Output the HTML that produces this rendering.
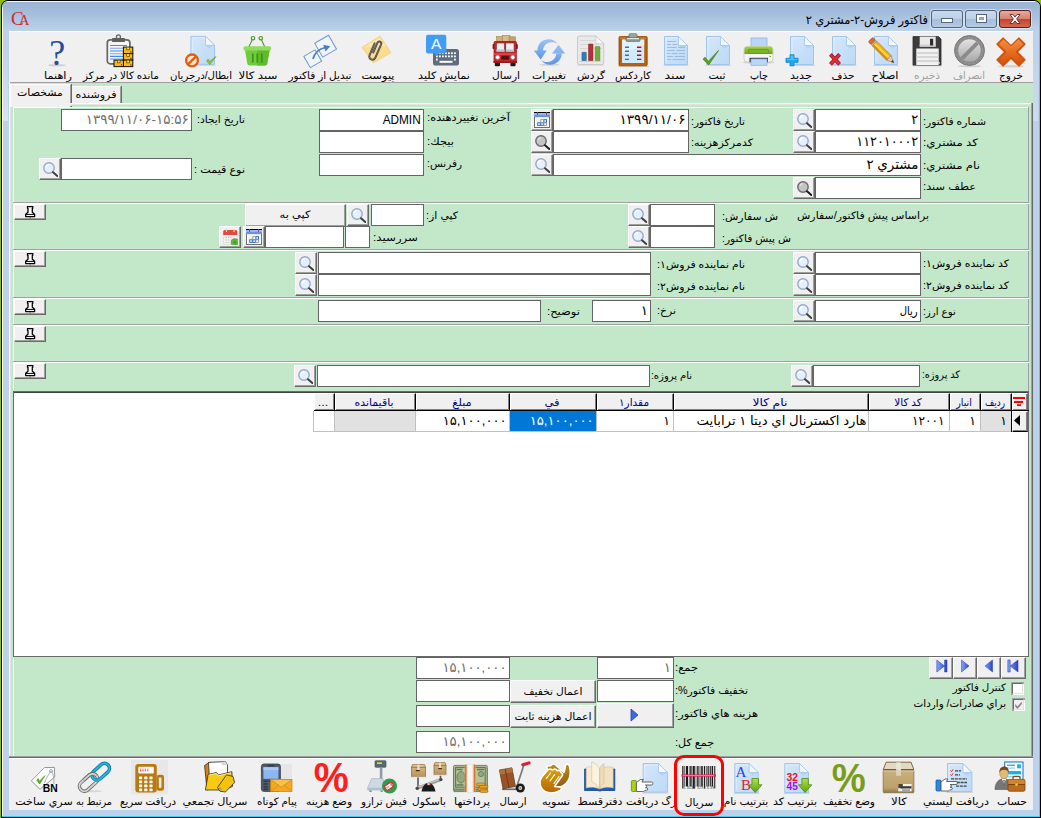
<!DOCTYPE html>
<html lang="fa"><head><meta charset="utf-8"><title>فاکتور فروش</title><style>
html,body{margin:0;padding:0}
body{width:1041px;height:818px;position:relative;overflow:hidden;background:#000;font-family:'Liberation Sans','DejaVu Sans',sans-serif;font-size:11px}
body div,body svg,body i{position:absolute;box-sizing:content-box}
.t{margin:0;padding:0}
.t span{position:static}
.ic{overflow:visible}
.in{border:1px solid #646464}
.bt{background:#f0f0f0;border:1px solid;border-color:#fff #696969 #696969 #fff;box-shadow:inset -1px -1px 0 #a0a0a0}
.gh{background:#f0f0f0;border:1px solid;border-color:#fff #000 #000 #fff;box-shadow:inset -1px -1px 0 #808080}
.cb{width:9px;height:9px;background:#fff;border:1px solid;border-color:#696969 #e3e3e3 #e3e3e3 #696969;box-shadow:-1px -1px 0 #a0a0a0,1px 1px 0 #fff,1px -1px 0 #a0a0a0,-1px 1px 0 #a0a0a0}
.wb{border:1px solid #56657a;border-radius:3px;background:linear-gradient(#c9daee 0,#bcd0e8 50%,#a4bedd 50%,#b5cbe6 100%);box-shadow:0 0 0 1px rgba(255,255,255,.45)}
.wb i{background:#fff;outline:1px solid #56657a;display:block}
.wb.cl{border-color:#5a1f1c;background:linear-gradient(#e6aa9c 0,#d8806d 50%,#c4422c 50%,#d26a4e 100%)}
</style></head>
<body>
<svg width="0" height="0" style="left:0;top:0"><defs>
<linearGradient id="gPg" x1="0" y1="0" x2="1" y2="1"><stop offset="0" stop-color="#d3e7fb"/><stop offset="1" stop-color="#bcd9f6"/></linearGradient>
<linearGradient id="gOr" x1="0" y1="0" x2="0" y2="1"><stop offset="0" stop-color="#f78f3f"/><stop offset="1" stop-color="#d54c06"/></linearGradient>
<linearGradient id="gGy" x1="0" y1="0" x2="0" y2="1"><stop offset="0" stop-color="#e2e2e2"/><stop offset="1" stop-color="#a9a9a9"/></linearGradient>
<linearGradient id="gGn" x1="0" y1="0" x2="0" y2="1"><stop offset="0" stop-color="#a4d648"/><stop offset="1" stop-color="#6ea51c"/></linearGradient>
<linearGradient id="gBl" x1="0" y1="0" x2="0" y2="1"><stop offset="0" stop-color="#9cc3f7"/><stop offset="1" stop-color="#5f95e6"/></linearGradient>
<linearGradient id="gBr" x1="0" y1="0" x2="0" y2="1"><stop offset="0" stop-color="#d4b47c"/><stop offset="1" stop-color="#b4935a"/></linearGradient>
<linearGradient id="gGd" x1="0" y1="0" x2="0" y2="1"><stop offset="0" stop-color="#d79a16"/><stop offset="1" stop-color="#a8650a"/></linearGradient>
<linearGradient id="gAr" x1="0" y1="0" x2="0" y2="1"><stop offset="0" stop-color="#b4e04a"/><stop offset="1" stop-color="#5fa010"/></linearGradient>
<linearGradient id="gPc" x1="0" y1="0" x2="1" y2="0"><stop offset="0" stop-color="#f6c21a"/><stop offset=".5" stop-color="#f3a90c"/><stop offset="1" stop-color="#d98508"/></linearGradient>
<linearGradient id="gNav" x1="0" y1="0" x2="1" y2="0"><stop offset="0" stop-color="#86a6fa"/><stop offset="1" stop-color="#2a44c8"/></linearGradient>
<linearGradient id="gBox" x1="0" y1="0" x2="0" y2="1"><stop offset="0" stop-color="#c9b07e"/><stop offset=".8" stop-color="#bca06a"/><stop offset="1" stop-color="#8f7444"/></linearGradient>
<linearGradient id="gHf" x1="0" y1="0" x2="0" y2="1"><stop offset="0" stop-color="#d6a20e"/><stop offset="1" stop-color="#b86604"/></linearGradient>
<linearGradient id="gHb" x1="0" y1="0" x2="0" y2="1"><stop offset="0" stop-color="#b88c1a"/><stop offset="1" stop-color="#9a5810"/></linearGradient>
</defs></svg>
<div style="left:0;top:0;width:1041px;height:818px;background:#8fbc14"></div>
<div style="left:1px;top:0;width:1040px;height:818px;background:#000;border-radius:7px 7px 0 0"></div>
<div style="left:2px;top:1px;width:1038px;height:816px;background:#bcd2ea;border-radius:6px 6px 0 0"></div>
<div style="left:2px;top:1px;width:1038px;height:30px;background:linear-gradient(#99b4d2,#a3bddb 40%,#bdd3eb);border-radius:6px 6px 0 0"></div>
<div style="left:7px;top:1px;width:1028px;height:1px;background:#f4f8fc;"></div>
<div style="left:1039px;top:7px;width:1px;height:810px;background:#3fd0ff;"></div>
<div style="left:2px;top:816px;width:1038px;height:1px;background:#3fd0ff;"></div>
<div style="left:2px;top:7px;width:1px;height:809px;background:#fff;"></div>
<div style="left:3px;top:45px;width:5px;height:76px;background:linear-gradient(#bcd2ea,#d6e4f3);"></div>
<div style="left:1033px;top:45px;width:5px;height:76px;background:linear-gradient(#bcd2ea,#cbdcef);"></div>
<div class="t" id="t1" style="top:11.5px;line-height:16px;font-size:12px;color:#000;white-space:nowrap;direction:rtl;right:113.5px;transform-origin:100% 50%;transform:scaleX(0.9541);">فاکتور فروش-۲-مشتري ۲</div>
<div class="wb" style="left:931px;top:10px;width:30px;height:16px"><i style="left:10px;top:8px;width:10px;height:3px"></i></div>
<div class="wb" style="left:965px;top:10px;width:30px;height:16px"><i style="left:11px;top:4px;width:5px;height:3px;background:#8ea4c4;border:2px solid #fff;outline:1px solid #56657a"></i></div>
<div class="wb cl" style="left:999px;top:10px;width:30px;height:16px"><svg width="14" height="12" viewBox="0 0 14 12" style="left:8px;top:2px"><path d="M2 1.5h3l2 2.6 2-2.6h3L8.6 6l3.4 4.500h-3l-2-2.6-2 2.6H2L5.400 6z" fill="#fff" stroke="#5a2a25" stroke-width=".9"/></svg></div>
<div class="t" id="t2" style="top:11.0px;line-height:16px;font-size:15px;color:#000;white-space:nowrap;left:11px;transform-origin:0 50%;"><span style="font-family:'Liberation Serif',serif;color:#d22b2b;letter-spacing:-5px;font-size:19px">C</span><span style="font-family:'Liberation Serif',serif;color:#d22b2b;font-size:15px">A</span></div>
<div style="left:9px;top:32px;width:1024px;height:50px;background:#f0f0f0;"></div>
<div style="left:9px;top:31px;width:1024px;height:1px;background:#fff;"></div>
<div style="left:9px;top:82px;width:1024px;height:1px;background:#a0a0a0;"></div>
<svg class="ic" style="left:995px;top:35px" width="36" height="34" viewBox="0 0 36 34"><ellipse cx="16" cy="31.300" rx="13" ry="1.200" fill="#000" opacity=".12"/><path transform="translate(16 17)" d="M0 -5.800L7.900 -13.700L13.700 -7.900L5.800 0L13.700 7.900L7.900 13.700L0 5.800L-7.900 13.700L-13.700 7.900L-5.800 0L-13.700 -7.900L-7.900 -13.700z" fill="url(#gOr)" stroke="#cf520c" stroke-width="1.800" stroke-linejoin="round"/><path transform="translate(16 17)" d="M-7.900 -12.600L0 -4.700L7.900 -12.600" fill="none" stroke="#fba55c" stroke-width="1" opacity=".7" stroke-linejoin="round"/></svg>
<div class="t" style="top:68.0px;line-height:16px;font-size:10.2px;color:#000;white-space:nowrap;direction:rtl;left:861px;width:300px;text-align:center;transform-origin:50% 50%;transform:scaleX(1.0247);"><span id="t3">خروج</span></div>
<svg class="ic" style="left:953px;top:35px" width="36" height="34" viewBox="0 0 36 34"><ellipse cx="16.500" cy="31.300" rx="12" ry="1" fill="#000" opacity=".12"/><circle cx="16.500" cy="15.500" r="15" fill="#8b8b8b" stroke="#7a7a7a" stroke-width="1"/><circle cx="16.500" cy="15.500" r="11.200" fill="url(#gGy)"/><path d="M7.500 22.200L23.200 6.500l2.700 2.700L10.200 24.900z" fill="#8b8b8b"/><circle cx="16.500" cy="15.500" r="13.200" fill="none" stroke="#a6a6a6" stroke-width=".7" stroke-dasharray="1.500 2.500"/></svg>
<div class="t" style="top:68.0px;line-height:16px;font-size:10.2px;color:#a0a0a0;white-space:nowrap;direction:rtl;left:819px;width:300px;text-align:center;transform-origin:50% 50%;transform:scaleX(0.9548);"><span id="t4">انصراف</span></div>
<svg class="ic" style="left:911px;top:35px" width="36" height="34" viewBox="0 0 36 34"><rect x="1" y="30.300" width="30" height="1" fill="#000" opacity=".12"/><path d="M2 1.600h25.500l2.500 2.500v26H2z" fill="#3d3d3d" stroke="#2a2a2a" stroke-width=".8"/><rect x="8.700" y="1.600" width="16" height="10" fill="#e9e9e9"/><rect x="8.700" y="9.600" width="16" height="2" fill="#cfcfcf"/><rect x="19" y="3.800" width="3.200" height="6.600" fill="#2e2e2e"/><rect x="5.300" y="13.500" width="22.400" height="16.500" fill="#f2f2f2"/><path d="M5.300 18h22.400M5.300 22h22.400M5.300 26h22.400" stroke="#cdcdcd" stroke-width="1.600"/><rect x="27.600" y="27.300" width="1.300" height="1.300" fill="#fff"/></svg>
<div class="t" style="top:68.0px;line-height:16px;font-size:10.2px;color:#a0a0a0;white-space:nowrap;direction:rtl;left:777px;width:300px;text-align:center;transform-origin:50% 50%;transform:scaleX(1.0452);"><span id="t5">ذخيره</span></div>
<svg class="ic" style="left:869px;top:35px" width="36" height="34" viewBox="0 0 36 34"><path d="M5.5 1.5h14l9 9v19h-23z" fill="url(#gPg)" stroke="#a2c5ee" stroke-width="1"/><path d="M7.0 27.0v-24h12" fill="none" stroke="#e4f0fc" stroke-width="1" opacity=".8"/><path d="M19.5 1.5v9h9z" fill="#f2f8fe" stroke="#a2c5ee" stroke-width=".8"/><path d="M19.5 10.5h9l-5.3999999999999995 3.15z" fill="#a9c9ee" opacity=".6"/><rect x="4.5" y="30.0" width="25" height="1" fill="#000" opacity=".12"/><g transform="translate(1.500 4.500) rotate(45)"><rect x="0" y="-3.200" width="4.200" height="6.400" rx="1.400" fill="#dd6a2c" stroke="#a8481a" stroke-width=".6"/><rect x="4.200" y="-3.200" width="1.800" height="6.400" fill="#b8b8b8" stroke="#777" stroke-width=".4"/><rect x="6" y="-3.200" width="20" height="6.400" fill="#f5b20c" stroke="#a9710a" stroke-width=".6"/><rect x="6" y="-1.100" width="20" height="2.200" fill="#fbd24a"/><rect x="6" y="1.300" width="20" height="1.900" fill="#dc8a08"/><path d="M26 -3.200L33 0L26 3.200z" fill="#e9c9a2" stroke="#8a6a4a" stroke-width=".5"/><path d="M30.300 -1.250L33 0L30.300 1.250z" fill="#333"/></g></svg>
<div class="t" style="top:68.0px;line-height:16px;font-size:10.2px;color:#000;white-space:nowrap;direction:rtl;left:735px;width:300px;text-align:center;transform-origin:50% 50%;transform:scaleX(1.1184);"><span id="t6">اصلاح</span></div>
<svg class="ic" style="left:827px;top:35px" width="36" height="34" viewBox="0 0 36 34"><path d="M5.5 1.5h14l9 9v19h-23z" fill="url(#gPg)" stroke="#a2c5ee" stroke-width="1"/><path d="M7.0 27.0v-24h12" fill="none" stroke="#e4f0fc" stroke-width="1" opacity=".8"/><path d="M19.5 1.5v9h9z" fill="#f2f8fe" stroke="#a2c5ee" stroke-width=".8"/><path d="M19.5 10.5h9l-5.3999999999999995 3.15z" fill="#a9c9ee" opacity=".6"/><rect x="4.5" y="30.0" width="25" height="1" fill="#000" opacity=".12"/><g transform="translate(8 24.400)"><path d="M-4.600 -5L4.600 5M4.600 -5L-4.600 5" stroke="#a8141c" stroke-width="3.800"/><path d="M-4.300 -4.700L4.300 4.700M4.300 -4.700L-4.300 4.700" stroke="#d8303a" stroke-width="2.400"/></g></svg>
<div class="t" style="top:68.0px;line-height:16px;font-size:10.2px;color:#000;white-space:nowrap;direction:rtl;left:693px;width:300px;text-align:center;transform-origin:50% 50%;transform:scaleX(1.0352);"><span id="t7">حذف</span></div>
<svg class="ic" style="left:785px;top:35px" width="36" height="34" viewBox="0 0 36 34"><path d="M5.5 1.5h14l9 9v19h-23z" fill="url(#gPg)" stroke="#a2c5ee" stroke-width="1"/><path d="M7.0 27.0v-24h12" fill="none" stroke="#e4f0fc" stroke-width="1" opacity=".8"/><path d="M19.5 1.5v9h9z" fill="#f2f8fe" stroke="#a2c5ee" stroke-width=".8"/><path d="M19.5 10.5h9l-5.3999999999999995 3.15z" fill="#a9c9ee" opacity=".6"/><rect x="4.5" y="30.0" width="25" height="1" fill="#000" opacity=".12"/><path d="M5 19.800h4v3.500h4v4h-4v3.500h-4v-3.500h-4v-4h4z" fill="#1fa8ec" stroke="#0f86c8" stroke-width=".9" stroke-linejoin="round"/><path d="M5.600 20.600h2.800v3.500h3.800v1h-10.400v-1h3.800z" fill="#5fc8f8" opacity=".8"/></svg>
<div class="t" style="top:68.0px;line-height:16px;font-size:10.2px;color:#000;white-space:nowrap;direction:rtl;left:651px;width:300px;text-align:center;transform-origin:50% 50%;transform:scaleX(1.1095);"><span id="t8">جديد</span></div>
<svg class="ic" style="left:743px;top:35px" width="36" height="34" viewBox="0 0 36 34"><ellipse cx="15.500" cy="27.500" rx="16" ry="1.300" fill="#000" opacity=".12"/><rect x="8" y="3" width="16" height="12" fill="#b9d6f5" stroke="#8fb6e6" stroke-width=".8"/><rect x="1" y="11.600" width="29" height="15.400" rx="3" fill="#f4f4f4" stroke="#c9c9c9" stroke-width=".8"/><path d="M1.400 19v-4.400a3 3 0 0 1 3-3h22.200a3 3 0 0 1 3 3V19z" fill="url(#gGn)"/><rect x="5.500" y="14.300" width="20" height="4.200" rx="1" fill="#7cb226" stroke="#5d8f14" stroke-width=".6"/><rect x="6.500" y="22.800" width="18.500" height="4.400" fill="#2e2e2e"/><rect x="8" y="24" width="16" height="6.300" fill="#b9d6f5" stroke="#8fb6e6" stroke-width=".8"/><circle cx="27.200" cy="21.500" r=".8" fill="#6ab01c"/></svg>
<div class="t" style="top:68.0px;line-height:16px;font-size:10.2px;color:#000;white-space:nowrap;direction:rtl;left:609px;width:300px;text-align:center;transform-origin:50% 50%;transform:scaleX(0.9474);"><span id="t9">چاپ</span></div>
<svg class="ic" style="left:701px;top:35px" width="36" height="34" viewBox="0 0 36 34"><path d="M5.5 1.5h14l9 9v19h-23z" fill="url(#gPg)" stroke="#a2c5ee" stroke-width="1"/><path d="M7.0 27.0v-24h12" fill="none" stroke="#e4f0fc" stroke-width="1" opacity=".8"/><path d="M19.5 1.5v9h9z" fill="#f2f8fe" stroke="#a2c5ee" stroke-width=".8"/><path d="M19.5 10.5h9l-5.3999999999999995 3.15z" fill="#a9c9ee" opacity=".6"/><rect x="4.5" y="30.0" width="25" height="1" fill="#000" opacity=".12"/><path d="M2.00 24.20L4.07 22.24L7.41 26.30L17.50 15.50L7.70 29.90z" fill="#5aa51a" stroke="#3f7f0c" stroke-width=".7" stroke-linejoin="round"/></svg>
<div class="t" style="top:68.0px;line-height:16px;font-size:10.2px;color:#000;white-space:nowrap;direction:rtl;left:567px;width:300px;text-align:center;transform-origin:50% 50%;transform:scaleX(1.0677);"><span id="t10">ثبت</span></div>
<svg class="ic" style="left:659px;top:35px" width="36" height="34" viewBox="0 0 36 34"><path d="M5.5 1.5h14l9 9v19h-23z" fill="url(#gPg)" stroke="#a2c5ee" stroke-width="1"/><path d="M7.0 27.0v-24h12" fill="none" stroke="#e4f0fc" stroke-width="1" opacity=".8"/><path d="M19.5 1.5v9h9z" fill="#f2f8fe" stroke="#a2c5ee" stroke-width=".8"/><path d="M19.5 10.5h9l-5.3999999999999995 3.15z" fill="#a9c9ee" opacity=".6"/><rect x="4.5" y="30.0" width="25" height="1" fill="#000" opacity=".12"/><path d="M8 6.500h9M8 9.500h4M13.500 9.500h5M8 12.500h9.500M19 12.500h7M8 15.500h8M17.500 15.500h8.500M8 18.500h3M12.500 18.500h6M20 18.500h6M8 21.500h6M15.500 21.500h10.500M8 24.500h4M13.500 24.500h12.500" stroke="#9bbbe0" stroke-width="1.200"/></svg>
<div class="t" style="top:68.0px;line-height:16px;font-size:10.2px;color:#000;white-space:nowrap;direction:rtl;left:525px;width:300px;text-align:center;transform-origin:50% 50%;transform:scaleX(1.2376);"><span id="t11">سند</span></div>
<svg class="ic" style="left:617px;top:35px" width="36" height="34" viewBox="0 0 36 34"><rect x="1" y="31" width="31" height="1" fill="#000" opacity=".12"/><rect x="2" y="1.600" width="28.200" height="29.200" rx="1" fill="#b9600f" stroke="#8a4208" stroke-width=".8"/><rect x="2.800" y="2.400" width="26.600" height="1.600" fill="#d98a3a" opacity=".7"/><rect x="5" y="4.600" width="22.200" height="23.400" fill="#d2e9f8"/><path d="M5 4.600h22.200v6L5 18z" fill="#e6f3fc" opacity=".8"/><path d="M8 12.250h4M8 16.250h4M8 20.300h4M8 24.400h4" stroke="#3d6fb0" stroke-width="1.400"/><path d="M20 12.250h4.300M20 16.250h4.300M20 20.300h4.300M20 24.400h4.300" stroke="#b0141c" stroke-width="1.400"/><rect x="9" y="2.400" width="14" height="4" rx="1" fill="#8d9c94" stroke="#5f6e66" stroke-width=".7"/><rect x="12" y="-1.300" width="8" height="4" rx="1.200" fill="#9aa9a1" stroke="#5f6e66" stroke-width=".7"/><rect x="10" y="3" width="12" height="1.200" fill="#e0e8e4"/></svg>
<div class="t" style="top:68.0px;line-height:16px;font-size:10.2px;color:#000;white-space:nowrap;direction:rtl;left:483px;width:300px;text-align:center;transform-origin:50% 50%;transform:scaleX(1.0213);"><span id="t12">کاردکس</span></div>
<svg class="ic" style="left:574px;top:35px" width="36" height="34" viewBox="0 0 36 34"><rect x="3" y="29.600" width="27" height="1" fill="#000" opacity=".12"/><path d="M5.500 1h16.500l7.700 7.700v18.800a2 2 0 0 1-2 2H5.500a2 2 0 0 1-2-2V3a2 2 0 0 1 2-2z" fill="#e9e9e9" stroke="#c4c4c4" stroke-width=".9"/><path d="M22 1v7.700h7.700z" fill="#fafafa" stroke="#c4c4c4" stroke-width=".7"/><path d="M6 5.500h15M6 9.500h19M6 13.500h22" stroke="#d6d6d6" stroke-width="1"/><rect x="7.900" y="17.250" width="4.400" height="8.500" rx=".6" fill="#2d7fb4" stroke="#1d5f8c" stroke-width=".5"/><rect x="14.500" y="9" width="4.500" height="16.750" rx=".6" fill="#b43236" stroke="#8a2024" stroke-width=".5"/><rect x="21.200" y="11.600" width="4.700" height="14.150" rx=".6" fill="#70ac3e" stroke="#4f8226" stroke-width=".5"/><rect x="5.500" y="26" width="22" height="1" fill="#cfcfcf"/></svg>
<div class="t" style="top:68.0px;line-height:16px;font-size:10.2px;color:#000;white-space:nowrap;direction:rtl;left:440.5px;width:300px;text-align:center;transform-origin:50% 50%;transform:scaleX(1.0199);"><span id="t13">گردش</span></div>
<svg class="ic" style="left:533px;top:35px" width="36" height="34" viewBox="0 0 36 34"><ellipse cx="16.500" cy="29.800" rx="10" ry="1" fill="#000" opacity=".12"/><path d="M.85 15.400H13.800L7.700 24.600zM4.400 15.600C4.400 8 10 4.200 15.800 4.200C19.500 4.200 22.500 6 24.600 9C22 7.200 20 7.200 18 7.250C13.500 7.500 10.100 11 10.100 15.600z" fill="url(#gBl)"/><path d="M19.100 18.500H32.100L25.500 9.700zM28.800 18.300C28.800 25.500 23 29.700 17.100 29.700C13.500 29.700 10 28 7.900 24.900C10.500 26.800 12.500 27 14.500 27C19.500 26.800 23.300 23 23.300 18.300z" fill="url(#gBl)"/></svg>
<div class="t" style="top:68.0px;line-height:16px;font-size:10.2px;color:#000;white-space:nowrap;direction:rtl;left:399px;width:300px;text-align:center;transform-origin:50% 50%;transform:scaleX(1.0641);"><span id="t14">تغييرات</span></div>
<svg class="ic" style="left:490px;top:35px" width="36" height="34" viewBox="0 0 36 34"><rect x="6.500" y="1.500" width="7" height="5" fill="#cfae7e" stroke="#9a7a4a" stroke-width=".5"/><rect x="12.500" y=".3" width="7.500" height="6" fill="#d8ba8c" stroke="#9a7a4a" stroke-width=".5"/><rect x="19" y="1.800" width="6.500" height="5" fill="#c4a070" stroke="#9a7a4a" stroke-width=".5"/><rect x="4.800" y="25" width="5.200" height="6.300" rx="1" fill="#1c1c1c"/><rect x="20.400" y="25" width="5.200" height="6.300" rx="1" fill="#1c1c1c"/><rect x="2.600" y="9" width="2.400" height="5" rx=".8" fill="#7a1416"/><rect x="25.400" y="9" width="2.400" height="5" rx=".8" fill="#7a1416"/><path d="M5 6.500h20.400a1 1 0 0 1 1 1V27H4V7.500a1 1 0 0 1 1-1z" fill="#c9272c" stroke="#8a1418" stroke-width=".7"/><rect x="6.300" y="8" width="8.300" height="8.800" fill="#e9eef2" stroke="#7a1416" stroke-width=".6"/><rect x="15.800" y="8" width="8.300" height="8.800" fill="#e9eef2" stroke="#7a1416" stroke-width=".6"/><path d="M6.300 14.500h8.300v2.300H6.300zM15.800 14.500h8.300v2.300h-8.300z" fill="#b9c4cc"/><rect x="4" y="18.500" width="22.400" height="1.200" fill="#e2555a"/><circle cx="7.600" cy="22.300" r="2.100" fill="#fff" stroke="#8a8a8a" stroke-width=".6"/><circle cx="22.800" cy="22.300" r="2.100" fill="#fff" stroke="#8a8a8a" stroke-width=".6"/><rect x="11.300" y="20.700" width="7.800" height="4" fill="#5a1012"/><rect x="3.400" y="26" width="23.600" height="2" fill="#9a1c20"/></svg>
<div class="t" style="top:68.0px;line-height:16px;font-size:10.2px;color:#000;white-space:nowrap;direction:rtl;left:356px;width:300px;text-align:center;transform-origin:50% 50%;transform:scaleX(1.0449);"><span id="t15">ارسال</span></div>
<svg class="ic" style="left:427px;top:35px" width="36" height="34" viewBox="0 0 36 34"><rect x="6" y="14" width="26" height="16.600" rx="2.600" fill="#606c7b"/><g fill="#fff"><rect x="9" y="17.300" width="1.800" height="1.800"/><rect x="12" y="17.300" width="1.800" height="1.800"/><rect x="15" y="17.300" width="1.800" height="1.800"/><rect x="18" y="17.300" width="1.800" height="1.800"/><rect x="21" y="17.300" width="1.800" height="1.800"/><rect x="24" y="17.300" width="1.800" height="1.800"/><rect x="27" y="17.300" width="1.800" height="1.800"/><rect x="9" y="20.500" width="1.800" height="1.800"/><rect x="12" y="20.500" width="1.800" height="1.800"/><rect x="15" y="20.500" width="1.800" height="1.800"/><rect x="18" y="20.500" width="1.800" height="1.800"/><rect x="21" y="20.500" width="1.800" height="1.800"/><rect x="24" y="20.500" width="1.800" height="1.800"/><rect x="27" y="20.500" width="1.800" height="1.800"/><rect x="9" y="23.700" width="1.800" height="1.800"/><rect x="27" y="23.700" width="1.800" height="1.800"/><rect x="12.500" y="25.800" width="13" height="2"/></g><path d="M1 -.2h16.300a2 2 0 0 1 2 2v14.700a2 2 0 0 1-2 2H11.500l-3 3.200v-3.200H1a2 2 0 0 1-2-2V1.800a2 2 0 0 1 2-2z" fill="#409cf5"/><text x="9.200" y="14.200" font-family="Liberation Sans,sans-serif" font-size="15.500" fill="#fff" text-anchor="middle">A</text></svg>
<div class="t" style="top:68.0px;line-height:16px;font-size:10.2px;color:#000;white-space:nowrap;direction:rtl;left:294px;width:300px;text-align:center;transform-origin:50% 50%;transform:scaleX(1.1031);"><span id="t16">نمايش کليد</span></div>
<svg class="ic" style="left:362px;top:35px" width="36" height="34" viewBox="0 0 36 34"><path d="M0 12.400L18 1L29 17.600L11.300 28z" fill="#fbdc8e" stroke="#f0c870" stroke-width=".6"/><path d="M2 12.600L18 2.400L24 11z" fill="#fdebb8" opacity=".7"/><path d="M11.200 17.500l4.200-9.600c1.200-2.700 4.800-1.300 3.700 1.500l-5.600 13c-1.800 4.200-7.600 1.900-5.900-2.300l5-11.800" fill="none" stroke="#3e3e3e" stroke-width="1.900" stroke-linecap="round"/><path d="M11.200 17.500l4.200-9.600c1.200-2.700 4.800-1.300 3.700 1.500l-5.600 13c-1.800 4.200-7.600 1.900-5.900-2.300l5-11.800" fill="none" stroke="#8c8c8c" stroke-width=".6" stroke-linecap="round"/></svg>
<div class="t" style="top:68.0px;line-height:16px;font-size:10.2px;color:#000;white-space:nowrap;direction:rtl;left:228.2px;width:300px;text-align:center;transform-origin:50% 50%;transform:scaleX(1.1104);"><span id="t17">پيوست</span></div>
<svg class="ic" style="left:304px;top:35px" width="36" height="34" viewBox="0 0 36 34"><g fill="#f1f5fa" stroke="#6a9ad2" stroke-width="1"><rect x="-6.500" y="-6.500" width="13" height="13" transform="translate(8.700 23.700) rotate(-30)"/><rect x="-8" y="-8" width="16" height="16" transform="translate(21.600 11.200) rotate(-30)"/></g><path d="M9 24c1.500-6 6-10 12-11.500" fill="none" stroke="#4a7fc0" stroke-width="1.700"/><path d="M19.300 9.800l7 1.500l-4.800 5.200z" fill="#4a7fc0"/></svg>
<div class="t" style="top:68.0px;line-height:16px;font-size:10.2px;color:#000;white-space:nowrap;direction:rtl;left:170px;width:300px;text-align:center;transform-origin:50% 50%;transform:scaleX(1.0275);"><span id="t18">تبديل از فاکتور</span></div>
<svg class="ic" style="left:242px;top:35px" width="36" height="34" viewBox="0 0 36 34"><path d="M6.800 12L10.400 4.400M22.800 12L19.300 4.400" stroke="#4c9a22" stroke-width="1.100"/><circle cx="11" cy="3.200" r="1.700" fill="none" stroke="#4c9a22" stroke-width="1.200"/><circle cx="18.800" cy="3.200" r="1.700" fill="none" stroke="#4c9a22" stroke-width="1.200"/><path d="M3 15h24.600l-2.300 13.600a2.400 2.400 0 0 1-2.400 2H7.700a2.400 2.400 0 0 1-2.400-2z" fill="#6fcc3a"/><path d="M15.300 15h12.300l-2.300 13.600a2.400 2.400 0 0 1-2.400 2h-7.600z" fill="#5fbb2c"/><rect x="1.500" y="11.200" width="27.600" height="4.400" rx="1.600" fill="#8fdc5e"/><path d="M10.800 19v8M15.300 19v8M19.800 19v8" stroke="#3f9418" stroke-width="1.700" stroke-linecap="round"/></svg>
<div class="t" style="top:68.0px;line-height:16px;font-size:10.2px;color:#000;white-space:nowrap;direction:rtl;left:108px;width:300px;text-align:center;transform-origin:50% 50%;transform:scaleX(1.1620);"><span id="t19">سبد کالا</span></div>
<svg class="ic" style="left:185px;top:35px" width="36" height="34" viewBox="0 0 36 34"><path d="M5.9 1.3h14.600000000000001l9 9v19h-23.6z" fill="url(#gPg)" stroke="#a2c5ee" stroke-width="1"/><path d="M7.4 26.8v-24h12.600000000000001" fill="none" stroke="#e4f0fc" stroke-width="1" opacity=".8"/><path d="M20.5 1.3v9h9z" fill="#f2f8fe" stroke="#a2c5ee" stroke-width=".8"/><path d="M20.5 10.3h9l-5.3999999999999995 3.15z" fill="#a9c9ee" opacity=".6"/><rect x="4.9" y="29.8" width="25.6" height="1" fill="#000" opacity=".12"/><circle cx="7" cy="25.400" r="5.900" fill="#fbe3cf" stroke="#df5f12" stroke-width="2.300"/><path d="M3.200 29.200L10.800 21.600" stroke="#df5f12" stroke-width="2.400"/><path d="M21.50 25.80L23.26 24.14L24.56 26.54L31.00 21.50L24.80 29.60z" fill="#8cc63a" stroke="#6aa51e" stroke-width=".7" stroke-linejoin="round"/></svg>
<div class="t" style="top:68.0px;line-height:16px;font-size:10.2px;color:#000;white-space:nowrap;direction:rtl;left:51px;width:300px;text-align:center;transform-origin:50% 50%;transform:scaleX(0.9975);"><span id="t20">ابطال/درجريان</span></div>
<svg class="ic" style="left:105px;top:35px" width="36" height="34" viewBox="0 0 36 34"><rect x="2.300" y="4.900" width="22.600" height="24" rx="3" fill="#f5f5f5" stroke="#666" stroke-width="1.700"/><path d="M5 10.500h17M5 16h17M5 21.400h17" stroke="#4a8af0" stroke-width="1.100"/><path d="M5 13.300h17M5 18.700h17M5 24.100h17" stroke="#7aa8f4" stroke-width="1.100"/><circle cx="13.400" cy="1.900" r="2" fill="#f0f0f0" stroke="#5f5f5f" stroke-width="1.300"/><rect x="7.100" y="3" width="12.800" height="3.900" rx=".5" fill="#5f5f5f"/><rect x="18.4" y="12.1" width="9.400" height="6.500" fill="#f8b818" stroke="#111" stroke-width="1"/><rect x="21.4" y="12.6" width="3.400" height="2.600" fill="#5a4208"/><rect x="22.099999999999998" y="12.6" width="2" height="1.900" fill="#f8e070"/><rect x="25.4" y="16.4" width="1" height="1" fill="#111"/><rect x="18.4" y="18.6" width="9.400" height="6.500" fill="#f8b818" stroke="#111" stroke-width="1"/><rect x="21.4" y="19.1" width="3.400" height="2.600" fill="#5a4208"/><rect x="22.099999999999998" y="19.1" width="2" height="1.900" fill="#f8e070"/><rect x="25.4" y="22.900000000000002" width="1" height="1" fill="#111"/><rect x="18.4" y="25.1" width="9.400" height="6.500" fill="#f8b818" stroke="#111" stroke-width="1"/><rect x="21.4" y="25.6" width="3.400" height="2.600" fill="#5a4208"/><rect x="22.099999999999998" y="25.6" width="2" height="1.900" fill="#f8e070"/><rect x="25.4" y="29.400000000000002" width="1" height="1" fill="#111"/><rect x="9" y="25.1" width="9.400" height="6.500" fill="#f8b818" stroke="#111" stroke-width="1"/><rect x="12" y="25.6" width="3.400" height="2.600" fill="#5a4208"/><rect x="12.7" y="25.6" width="2" height="1.900" fill="#f8e070"/><rect x="16" y="29.400000000000002" width="1" height="1" fill="#111"/></svg>
<div class="t" style="top:68.0px;line-height:16px;font-size:10.2px;color:#000;white-space:nowrap;direction:rtl;left:-29px;width:300px;text-align:center;transform-origin:50% 50%;transform:scaleX(1.0087);"><span id="t21">مانده کالا در مرکز</span></div>
<svg class="ic" style="left:41px;top:35px" width="36" height="34" viewBox="0 0 36 34"><ellipse cx="16" cy="30.300" rx="9" ry="1" fill="#000" opacity=".15"/><text x="16.200" y="29.600" font-family="Liberation Serif,serif" font-size="36" fill="#1f4f9e" text-anchor="middle">?</text></svg>
<div class="t" style="top:68.0px;line-height:16px;font-size:10.2px;color:#000;white-space:nowrap;direction:rtl;left:-92.5px;width:300px;text-align:center;transform-origin:50% 50%;transform:scaleX(1.1110);"><span id="t22">راهنما</span></div>
<div style="left:9px;top:83px;width:1024px;height:674px;background:#c3e7c9;"></div>
<div style="left:9px;top:103px;width:1023px;height:1px;background:#fff;"></div>
<div style="left:9px;top:82px;width:1px;height:675px;background:#fff;"></div>
<div style="left:10px;top:103px;width:1px;height:654px;background:#e3e3e3;"></div>
<div style="left:1031px;top:103px;width:1px;height:654px;background:#a0a0a0;"></div>
<div style="left:1032px;top:103px;width:1px;height:654px;background:#696969;"></div>
<div style="left:71px;top:86px;width:49px;height:16px;background:#f0f0f0;border-top:1px solid #fff;border-right:1px solid #a0a0a0;box-shadow:1px 0 0 #696969"></div>
<div style="left:10px;top:84px;width:59px;height:22px;background:#f0f0f0;border-top:1px solid #fff;border-left:1px solid #fff;border-right:1px solid #a0a0a0;box-shadow:1px 0 0 #696969"></div>
<div style="left:11px;top:103px;width:1019px;height:3px;background:#f0f0f0;"></div>
<div style="left:71px;top:103px;width:960px;height:3px;background:#c3e7c9;"></div>
<div style="left:71px;top:103px;width:960px;height:1px;background:#fff;"></div>
<div style="left:71px;top:104px;width:960px;height:1px;background:#e3e3e3;"></div>
<div class="t" style="top:85.0px;line-height:16px;font-size:10.2px;color:#000;white-space:nowrap;direction:rtl;left:-110px;width:300px;text-align:center;transform-origin:50% 50%;transform:scaleX(1.0784);"><span id="t23">مشخصات</span></div>
<div class="t" style="top:87.0px;line-height:16px;font-size:10.2px;color:#000;white-space:nowrap;direction:rtl;left:-54px;width:300px;text-align:center;transform-origin:50% 50%;transform:scaleX(1.0870);"><span id="t24">فروشنده</span></div>
<div style="left:13px;top:107px;width:1016px;height:1px;background:#fff;"></div>
<div style="left:13px;top:107px;width:1px;height:650px;background:#fff;"></div>
<div style="left:1028px;top:107px;width:1px;height:550px;background:#a0a0a0;"></div>
<div class="t" id="t25" style="top:114.2px;line-height:16px;font-size:10.2px;color:#000;white-space:nowrap;direction:rtl;left:923px;transform-origin:0 50%;transform:scaleX(1.0583);">شماره فاکتور:</div>
<div class="t" id="t26" style="top:135.29999999999998px;line-height:16px;font-size:10.2px;color:#000;white-space:nowrap;direction:rtl;left:923px;transform-origin:0 50%;transform:scaleX(1.1683);">کد مشتري:</div>
<div class="t" id="t27" style="top:157.5px;line-height:16px;font-size:10.2px;color:#000;white-space:nowrap;direction:rtl;left:923px;transform-origin:0 50%;transform:scaleX(1.1603);">نام مشتري:</div>
<div class="t" id="t28" style="top:178.7px;line-height:16px;font-size:10.2px;color:#000;white-space:nowrap;direction:rtl;left:923px;transform-origin:0 50%;transform:scaleX(1.1132);">عطف سند:</div>
<div class="in" style="left:815px;top:109px;width:104px;height:20px;background:#fff"></div>
<div class="t" id="t29" style="top:112.0px;line-height:16px;font-size:13.5px;color:#000;white-space:nowrap;direction:rtl;right:123px;transform-origin:100% 50%;transform:scaleX(0.9634);">۲</div>
<div class="in" style="left:815px;top:131px;width:104px;height:20px;background:#fff"></div>
<div class="t" id="t30" style="top:134.0px;line-height:16px;font-size:13.5px;color:#000;white-space:nowrap;direction:rtl;right:123px;transform-origin:100% 50%;transform:scaleX(0.9500);">۱۱۲۰۱۰۰۰۲</div>
<div class="in" style="left:553px;top:154px;width:366px;height:20px;background:#fff"></div>
<div class="t" id="t31" style="top:157.0px;line-height:16px;font-size:13.5px;color:#000;white-space:nowrap;direction:rtl;right:123px;transform-origin:100% 50%;transform:scaleX(0.9925);">مشتري ۲</div>
<div class="in" style="left:815px;top:177px;width:104px;height:20px;background:#fff"></div>
<div class="bt" style="left:793px;top:109px;width:20px;height:20px"><svg width="16" height="16" viewBox="0 0 16 16" style="left:2px;top:2px"><circle cx="7" cy="7" r="5.200" fill="#e6effc" stroke="#94abcd" stroke-width="1.400"/><path d="M4 6.500a3.300 3.300 0 0 1 3-2.800" fill="none" stroke="#fff" stroke-width="1.200"/><path d="M11 11.200l4.300 3.800" stroke="#3c3c3c" stroke-width="1.900" stroke-linecap="round"/></svg></div>
<div class="bt" style="left:793px;top:131px;width:20px;height:20px"><svg width="16" height="16" viewBox="0 0 16 16" style="left:2px;top:2px"><circle cx="7" cy="7" r="5.200" fill="#e6effc" stroke="#94abcd" stroke-width="1.400"/><path d="M4 6.500a3.300 3.300 0 0 1 3-2.800" fill="none" stroke="#fff" stroke-width="1.200"/><path d="M11 11.200l4.300 3.800" stroke="#3c3c3c" stroke-width="1.900" stroke-linecap="round"/></svg></div>
<div class="bt" style="left:793px;top:177px;width:20px;height:20px"><svg width="16" height="16" viewBox="0 0 16 16" style="left:2px;top:2px"><circle cx="7" cy="7" r="5.200" fill="#c4c4c4" stroke="#6a6a6a" stroke-width="1.400"/><path d="M4 6.500a3.300 3.300 0 0 1 3-2.800" fill="none" stroke="#e0e0e0" stroke-width="1.200"/><path d="M11 11.200l4.300 3.800" stroke="#1c1c1c" stroke-width="2" stroke-linecap="round"/></svg></div>
<div class="t" id="t32" style="top:113.9px;line-height:16px;font-size:10.2px;color:#000;white-space:nowrap;direction:rtl;left:691px;transform-origin:0 50%;transform:scaleX(1.0381);">تاريخ فاکتور:</div>
<div class="t" id="t33" style="top:135.1px;line-height:16px;font-size:10.2px;color:#000;white-space:nowrap;direction:rtl;left:691px;transform-origin:0 50%;transform:scaleX(1.0886);">کدمرکزهزينه:</div>
<div class="in" style="left:553px;top:109px;width:134px;height:20px;background:#fff"></div>
<div class="t" id="t34" style="top:112.0px;line-height:16px;font-size:13.5px;color:#000;white-space:nowrap;direction:rtl;right:355px;transform-origin:100% 50%;transform:scaleX(1.0074);">۱۳۹۹/۱۱/۰۶</div>
<div class="in" style="left:553px;top:131px;width:134px;height:20px;background:#fff"></div>
<div class="bt" style="left:531px;top:109px;width:20px;height:20px"><svg width="16" height="16" viewBox="0 0 16 16" style="left:2px;top:2px"><rect x=".5" y=".5" width="15" height="15" fill="#fff" stroke="#6e6e6e"/><rect x="0" y="0" width="16" height="1.200" fill="#000"/><rect x="0" y="1.200" width="16" height="4" fill="#6c90e2"/><rect x="0" y="1.200" width="16" height="1.500" fill="#a9c0f2"/><path d="M3.500 0v2.800M12.500 0v2.800" stroke="#555" stroke-width="1"/><rect x="2" y="6.500" width="12" height="8" fill="#f0f0f0"/><g fill="#fff" stroke="#2f6fd0" stroke-width="1"><rect x="9.900" y="7.700" width="2.600" height="2.600"/><rect x="3.700" y="10.800" width="2.600" height="2.600"/><rect x="6.800" y="10.800" width="2.600" height="2.600"/></g><g fill="#fff" stroke="#8a8a8a" stroke-width=".8"><rect x="6.800" y="7.700" width="2.600" height="2.600"/><rect x="9.900" y="10.800" width="2.600" height="2.600"/></g></svg></div>
<div class="bt" style="left:531px;top:131px;width:20px;height:20px"><svg width="16" height="16" viewBox="0 0 16 16" style="left:2px;top:2px"><circle cx="7" cy="7" r="5.200" fill="#c4c4c4" stroke="#6a6a6a" stroke-width="1.400"/><path d="M4 6.500a3.300 3.300 0 0 1 3-2.800" fill="none" stroke="#e0e0e0" stroke-width="1.200"/><path d="M11 11.200l4.300 3.800" stroke="#1c1c1c" stroke-width="2" stroke-linecap="round"/></svg></div>
<div class="bt" style="left:531px;top:154px;width:20px;height:20px"><svg width="16" height="16" viewBox="0 0 16 16" style="left:2px;top:2px"><circle cx="7" cy="7" r="5.200" fill="#e6effc" stroke="#94abcd" stroke-width="1.400"/><path d="M4 6.500a3.300 3.300 0 0 1 3-2.800" fill="none" stroke="#fff" stroke-width="1.200"/><path d="M11 11.200l4.300 3.800" stroke="#3c3c3c" stroke-width="1.900" stroke-linecap="round"/></svg></div>
<div class="t" id="t35" style="top:110.3px;line-height:16px;font-size:10.2px;color:#000;white-space:nowrap;direction:rtl;left:427px;transform-origin:0 50%;transform:scaleX(1.1186);">آخرين تغييردهنده:</div>
<div class="t" id="t36" style="top:133.6px;line-height:16px;font-size:10.2px;color:#000;white-space:nowrap;direction:rtl;left:427px;transform-origin:0 50%;transform:scaleX(1.1294);">بيجك:</div>
<div class="t" id="t37" style="top:156.1px;line-height:16px;font-size:10.2px;color:#000;white-space:nowrap;direction:rtl;left:427px;transform-origin:0 50%;transform:scaleX(1.0271);">رفرنس:</div>
<div class="in" style="left:319px;top:109px;width:103px;height:20px;background:#fff"></div>
<div class="t" id="t38" style="top:112.0px;line-height:16px;font-size:12px;color:#000;white-space:nowrap;direction:rtl;right:620px;transform-origin:100% 50%;transform:scaleX(0.9826);">ADMIN</div>
<div class="in" style="left:319px;top:131px;width:103px;height:20px;background:#fff"></div>
<div class="in" style="left:319px;top:154px;width:103px;height:20px;background:#fff"></div>
<div class="t" id="t39" style="top:112.3px;line-height:16px;font-size:10.2px;color:#000;white-space:nowrap;direction:rtl;left:197px;transform-origin:0 50%;transform:scaleX(1.0474);">تاريخ ايجاد:</div>
<div class="in" style="left:61px;top:109px;width:129px;height:20px;background:#fff"></div>
<div class="t" id="t40" style="top:112.0px;line-height:16px;font-size:13.5px;color:#6d6d6d;white-space:nowrap;direction:rtl;right:852px;transform-origin:100% 50%;transform:scaleX(1.0023);">۱۳۹۹/۱۱/۰۶-۱۵:۵۶</div>
<div class="t" id="t41" style="top:162.0px;line-height:16px;font-size:10.2px;color:#000;white-space:nowrap;direction:rtl;left:194px;transform-origin:0 50%;transform:scaleX(1.0964);">نوع قيمت :</div>
<div class="in" style="left:61px;top:158px;width:129px;height:20px;background:#fff"></div>
<div class="bt" style="left:39px;top:158px;width:20px;height:20px"><svg width="16" height="16" viewBox="0 0 16 16" style="left:2px;top:2px"><circle cx="7" cy="7" r="5.200" fill="#e6effc" stroke="#94abcd" stroke-width="1.400"/><path d="M4 6.500a3.300 3.300 0 0 1 3-2.800" fill="none" stroke="#fff" stroke-width="1.200"/><path d="M11 11.200l4.300 3.800" stroke="#3c3c3c" stroke-width="1.900" stroke-linecap="round"/></svg></div>
<div style="left:13px;top:202px;width:1016px;height:1px;background:#a0a0a0;"></div>
<div style="left:13px;top:203px;width:1016px;height:1px;background:#fff;"></div>
<div class="t" id="t42" style="top:208.39999999999998px;line-height:16px;font-size:10.2px;color:#000;white-space:nowrap;direction:rtl;left:797px;transform-origin:0 50%;transform:scaleX(1.0733);">براساس پيش فاکتور/سفارش</div>
<div class="t" id="t43" style="top:208.89999999999998px;line-height:16px;font-size:10.2px;color:#000;white-space:nowrap;direction:rtl;left:722px;transform-origin:0 50%;transform:scaleX(1.0718);">ش سفارش:</div>
<div class="t" id="t44" style="top:230.7px;line-height:16px;font-size:10.2px;color:#000;white-space:nowrap;direction:rtl;left:722px;transform-origin:0 50%;transform:scaleX(1.0469);">ش پيش فاکتور:</div>
<div class="in" style="left:650px;top:204px;width:63px;height:20px;background:#fff"></div>
<div class="in" style="left:650px;top:226px;width:63px;height:20px;background:#fff"></div>
<div class="bt" style="left:628px;top:204px;width:20px;height:20px"><svg width="16" height="16" viewBox="0 0 16 16" style="left:2px;top:2px"><circle cx="7" cy="7" r="5.200" fill="#e6effc" stroke="#94abcd" stroke-width="1.400"/><path d="M4 6.500a3.300 3.300 0 0 1 3-2.800" fill="none" stroke="#fff" stroke-width="1.200"/><path d="M11 11.200l4.300 3.800" stroke="#3c3c3c" stroke-width="1.900" stroke-linecap="round"/></svg></div>
<div class="bt" style="left:628px;top:226px;width:20px;height:20px"><svg width="16" height="16" viewBox="0 0 16 16" style="left:2px;top:2px"><circle cx="7" cy="7" r="5.200" fill="#e6effc" stroke="#94abcd" stroke-width="1.400"/><path d="M4 6.500a3.300 3.300 0 0 1 3-2.800" fill="none" stroke="#fff" stroke-width="1.200"/><path d="M11 11.200l4.300 3.800" stroke="#3c3c3c" stroke-width="1.900" stroke-linecap="round"/></svg></div>
<div class="t" id="t45" style="top:207.5px;line-height:16px;font-size:10.2px;color:#000;white-space:nowrap;direction:rtl;left:426px;transform-origin:0 50%;transform:scaleX(1.0728);">کپي از:</div>
<div class="in" style="left:371px;top:204px;width:51px;height:20px;background:#fff"></div>
<div class="bt" style="left:347px;top:204px;width:20px;height:20px"><svg width="16" height="16" viewBox="0 0 16 16" style="left:2px;top:2px"><circle cx="7" cy="7" r="5.200" fill="#e6effc" stroke="#94abcd" stroke-width="1.400"/><path d="M4 6.500a3.300 3.300 0 0 1 3-2.800" fill="none" stroke="#fff" stroke-width="1.200"/><path d="M11 11.200l4.300 3.800" stroke="#3c3c3c" stroke-width="1.900" stroke-linecap="round"/></svg></div>
<div class="bt" style="left:245px;top:204px;width:99px;height:21px"></div>
<div class="t" style="top:207.0px;line-height:16px;font-size:10.2px;color:#000;white-space:nowrap;direction:rtl;left:145px;width:300px;text-align:center;transform-origin:50% 50%;transform:scaleX(1.1254);"><span id="t46">کپي به</span></div>
<div class="t" id="t47" style="top:230.2px;line-height:16px;font-size:10.2px;color:#000;white-space:nowrap;direction:rtl;left:373px;transform-origin:0 50%;transform:scaleX(1.1576);">سررسيد:</div>
<div class="in" style="left:345px;top:226px;width:23px;height:20px;background:#fff"></div>
<div class="in" style="left:265px;top:226px;width:77px;height:20px;background:#fff"></div>
<div class="bt" style="left:243px;top:226px;width:20px;height:20px"><svg width="16" height="16" viewBox="0 0 16 16" style="left:2px;top:2px"><rect x=".5" y=".5" width="15" height="15" fill="#fff" stroke="#6e6e6e"/><rect x="0" y="0" width="16" height="1.200" fill="#000"/><rect x="0" y="1.200" width="16" height="4" fill="#6c90e2"/><rect x="0" y="1.200" width="16" height="1.500" fill="#a9c0f2"/><path d="M3.500 0v2.800M12.500 0v2.800" stroke="#555" stroke-width="1"/><rect x="2" y="6.500" width="12" height="8" fill="#f0f0f0"/><g fill="#fff" stroke="#2f6fd0" stroke-width="1"><rect x="9.900" y="7.700" width="2.600" height="2.600"/><rect x="3.700" y="10.800" width="2.600" height="2.600"/><rect x="6.800" y="10.800" width="2.600" height="2.600"/></g><g fill="#fff" stroke="#8a8a8a" stroke-width=".8"><rect x="6.800" y="7.700" width="2.600" height="2.600"/><rect x="9.900" y="10.800" width="2.600" height="2.600"/></g></svg></div>
<div class="bt" style="left:219px;top:226px;width:20px;height:20px"><svg width="16" height="16" viewBox="0 0 16 16" style="left:2px;top:2px"><rect x="1.500" y="2" width="13.500" height="13.500" rx="1" fill="#f3f3f3" stroke="#dcdcdc" stroke-width=".8"/><path d="M1.200 6V2.500a1.500 1.500 0 0 1 1.500-1.500h11a1.500 1.500 0 0 1 1.500 1.500V6z" fill="#e8483c"/><path d="M4.500 0v2.500M12 0v2.500" stroke="#d8d8d8" stroke-width="1.200" stroke-linecap="round"/><path d="M3.500 8.500h6M3.500 11h5M3.500 13.500h4" stroke="#bdbdbd" stroke-width="1.200" stroke-dasharray="1.300 1"/><circle cx="12.800" cy="13.200" r="3.500" fill="#52c424" stroke="#8a8a8a" stroke-width="1.100"/><circle cx="12.800" cy="13.200" r="1.300" fill="#3a9a14"/></svg></div>
<div class="bt" style="left:14px;top:204px;width:30px;height:14px"><svg width="12" height="14" viewBox="0 0 12 14" style="left:9px;top:1px"><path d="M3.500 .600h5.300v1.700h-.5v4l2.300 2v2.300h-8.900v-2.300l2.300-2v-4h-.5z" fill="#fff" stroke="#000" stroke-width="1.300" stroke-linejoin="round"/><path d="M2 8.400h8.300" stroke="#000" stroke-width="1"/><path d="M6.150 11v2.800" stroke="#777" stroke-width="1"/></svg></div>
<div style="left:13px;top:249px;width:1016px;height:1px;background:#a0a0a0;"></div>
<div style="left:13px;top:250px;width:1016px;height:1px;background:#fff;"></div>
<div class="t" id="t48" style="top:256.0px;line-height:16px;font-size:10.2px;color:#000;white-space:nowrap;direction:rtl;left:923px;transform-origin:0 50%;transform:scaleX(1.0687);">کد نماينده فروش۱:</div>
<div class="t" id="t49" style="top:278.09999999999997px;line-height:16px;font-size:10.2px;color:#000;white-space:nowrap;direction:rtl;left:923px;transform-origin:0 50%;transform:scaleX(1.0687);">کد نماينده فروش۲:</div>
<div class="in" style="left:815px;top:252px;width:104px;height:20px;background:#fff"></div>
<div class="in" style="left:815px;top:274px;width:104px;height:20px;background:#fff"></div>
<div class="bt" style="left:793px;top:252px;width:20px;height:20px"><svg width="16" height="16" viewBox="0 0 16 16" style="left:2px;top:2px"><circle cx="7" cy="7" r="5.200" fill="#e6effc" stroke="#94abcd" stroke-width="1.400"/><path d="M4 6.500a3.300 3.300 0 0 1 3-2.800" fill="none" stroke="#fff" stroke-width="1.200"/><path d="M11 11.200l4.300 3.800" stroke="#3c3c3c" stroke-width="1.900" stroke-linecap="round"/></svg></div>
<div class="bt" style="left:793px;top:274px;width:20px;height:20px"><svg width="16" height="16" viewBox="0 0 16 16" style="left:2px;top:2px"><circle cx="7" cy="7" r="5.200" fill="#e6effc" stroke="#94abcd" stroke-width="1.400"/><path d="M4 6.500a3.300 3.300 0 0 1 3-2.800" fill="none" stroke="#fff" stroke-width="1.200"/><path d="M11 11.200l4.300 3.800" stroke="#3c3c3c" stroke-width="1.900" stroke-linecap="round"/></svg></div>
<div class="t" id="t50" style="top:256.59999999999997px;line-height:16px;font-size:10.2px;color:#000;white-space:nowrap;direction:rtl;left:657px;transform-origin:0 50%;transform:scaleX(1.0665);">نام نماينده فروش۱:</div>
<div class="t" id="t51" style="top:278.5px;line-height:16px;font-size:10.2px;color:#000;white-space:nowrap;direction:rtl;left:657px;transform-origin:0 50%;transform:scaleX(1.0665);">نام نماينده فروش۲:</div>
<div class="in" style="left:318px;top:252px;width:331px;height:20px;background:#fff"></div>
<div class="in" style="left:318px;top:274px;width:331px;height:20px;background:#fff"></div>
<div class="bt" style="left:295px;top:252px;width:20px;height:20px"><svg width="16" height="16" viewBox="0 0 16 16" style="left:2px;top:2px"><circle cx="7" cy="7" r="5.200" fill="#e6effc" stroke="#94abcd" stroke-width="1.400"/><path d="M4 6.500a3.300 3.300 0 0 1 3-2.800" fill="none" stroke="#fff" stroke-width="1.200"/><path d="M11 11.200l4.300 3.800" stroke="#3c3c3c" stroke-width="1.900" stroke-linecap="round"/></svg></div>
<div class="bt" style="left:295px;top:274px;width:20px;height:20px"><svg width="16" height="16" viewBox="0 0 16 16" style="left:2px;top:2px"><circle cx="7" cy="7" r="5.200" fill="#e6effc" stroke="#94abcd" stroke-width="1.400"/><path d="M4 6.500a3.300 3.300 0 0 1 3-2.800" fill="none" stroke="#fff" stroke-width="1.200"/><path d="M11 11.200l4.300 3.800" stroke="#3c3c3c" stroke-width="1.900" stroke-linecap="round"/></svg></div>
<div class="bt" style="left:14px;top:251px;width:30px;height:14px"><svg width="12" height="14" viewBox="0 0 12 14" style="left:9px;top:1px"><path d="M3.500 .600h5.300v1.700h-.5v4l2.300 2v2.300h-8.900v-2.300l2.300-2v-4h-.5z" fill="#fff" stroke="#000" stroke-width="1.300" stroke-linejoin="round"/><path d="M2 8.400h8.300" stroke="#000" stroke-width="1"/><path d="M6.150 11v2.800" stroke="#777" stroke-width="1"/></svg></div>
<div style="left:13px;top:297px;width:1016px;height:1px;background:#a0a0a0;"></div>
<div style="left:13px;top:298px;width:1016px;height:1px;background:#fff;"></div>
<div class="t" id="t52" style="top:303.9px;line-height:16px;font-size:10.2px;color:#000;white-space:nowrap;direction:rtl;left:923px;transform-origin:0 50%;transform:scaleX(1.0149);">نوع ارز:</div>
<div class="in" style="left:815px;top:300px;width:104px;height:20px;background:#fff"></div>
<div class="t" id="t53" style="top:303.0px;line-height:16px;font-size:11.5px;color:#000;white-space:nowrap;direction:rtl;right:123px;transform-origin:100% 50%;transform:scaleX(0.8727);">ريال</div>
<div class="bt" style="left:793px;top:300px;width:20px;height:20px"><svg width="16" height="16" viewBox="0 0 16 16" style="left:2px;top:2px"><circle cx="7" cy="7" r="5.200" fill="#e6effc" stroke="#94abcd" stroke-width="1.400"/><path d="M4 6.500a3.300 3.300 0 0 1 3-2.800" fill="none" stroke="#fff" stroke-width="1.200"/><path d="M11 11.200l4.300 3.800" stroke="#3c3c3c" stroke-width="1.900" stroke-linecap="round"/></svg></div>
<div class="t" id="t54" style="top:303.4px;line-height:16px;font-size:10.2px;color:#000;white-space:nowrap;direction:rtl;left:657px;transform-origin:0 50%;transform:scaleX(1.0629);">نرخ:</div>
<div class="in" style="left:592px;top:300px;width:57px;height:20px;background:#fff"></div>
<div class="t" id="t55" style="top:303.0px;line-height:16px;font-size:13.5px;color:#000;white-space:nowrap;direction:rtl;right:393px;transform-origin:100% 50%;">۱</div>
<div class="t" id="t56" style="top:303.7px;line-height:16px;font-size:10.2px;color:#000;white-space:nowrap;direction:rtl;left:547px;transform-origin:0 50%;transform:scaleX(1.1288);">توضيح:</div>
<div class="in" style="left:318px;top:300px;width:221px;height:20px;background:#fff"></div>
<div class="bt" style="left:14px;top:299px;width:30px;height:14px"><svg width="12" height="14" viewBox="0 0 12 14" style="left:9px;top:1px"><path d="M3.500 .600h5.300v1.700h-.5v4l2.300 2v2.300h-8.900v-2.300l2.300-2v-4h-.5z" fill="#fff" stroke="#000" stroke-width="1.300" stroke-linejoin="round"/><path d="M2 8.400h8.300" stroke="#000" stroke-width="1"/><path d="M6.150 11v2.800" stroke="#777" stroke-width="1"/></svg></div>
<div style="left:13px;top:324px;width:1016px;height:1px;background:#a0a0a0;"></div>
<div style="left:13px;top:325px;width:1016px;height:1px;background:#fff;"></div>
<div class="bt" style="left:14px;top:326px;width:30px;height:14px"><svg width="12" height="14" viewBox="0 0 12 14" style="left:9px;top:1px"><path d="M3.500 .600h5.300v1.700h-.5v4l2.300 2v2.300h-8.900v-2.300l2.300-2v-4h-.5z" fill="#fff" stroke="#000" stroke-width="1.300" stroke-linejoin="round"/><path d="M2 8.400h8.300" stroke="#000" stroke-width="1"/><path d="M6.150 11v2.800" stroke="#777" stroke-width="1"/></svg></div>
<div style="left:13px;top:361px;width:1016px;height:1px;background:#a0a0a0;"></div>
<div style="left:13px;top:362px;width:1016px;height:1px;background:#fff;"></div>
<div class="t" id="t57" style="top:367.4px;line-height:16px;font-size:10.2px;color:#000;white-space:nowrap;direction:rtl;left:922px;transform-origin:0 50%;transform:scaleX(0.9620);">کد پروژه:</div>
<div class="in" style="left:813px;top:365px;width:105px;height:20px;background:#fff"></div>
<div class="bt" style="left:791px;top:365px;width:20px;height:20px"><svg width="16" height="16" viewBox="0 0 16 16" style="left:2px;top:2px"><circle cx="7" cy="7" r="5.200" fill="#e6effc" stroke="#94abcd" stroke-width="1.400"/><path d="M4 6.500a3.300 3.300 0 0 1 3-2.800" fill="none" stroke="#fff" stroke-width="1.200"/><path d="M11 11.200l4.300 3.800" stroke="#3c3c3c" stroke-width="1.900" stroke-linecap="round"/></svg></div>
<div class="t" id="t58" style="top:367.5px;line-height:16px;font-size:10.2px;color:#000;white-space:nowrap;direction:rtl;left:651px;transform-origin:0 50%;transform:scaleX(0.9868);">نام پروژه:</div>
<div class="in" style="left:317px;top:365px;width:331px;height:20px;background:#fff"></div>
<div class="bt" style="left:294px;top:365px;width:20px;height:20px"><svg width="16" height="16" viewBox="0 0 16 16" style="left:2px;top:2px"><circle cx="7" cy="7" r="5.200" fill="#e6effc" stroke="#94abcd" stroke-width="1.400"/><path d="M4 6.500a3.300 3.300 0 0 1 3-2.800" fill="none" stroke="#fff" stroke-width="1.200"/><path d="M11 11.200l4.300 3.800" stroke="#3c3c3c" stroke-width="1.900" stroke-linecap="round"/></svg></div>
<div class="bt" style="left:14px;top:363px;width:30px;height:14px"><svg width="12" height="14" viewBox="0 0 12 14" style="left:9px;top:1px"><path d="M3.500 .600h5.300v1.700h-.5v4l2.300 2v2.300h-8.900v-2.300l2.300-2v-4h-.5z" fill="#fff" stroke="#000" stroke-width="1.300" stroke-linejoin="round"/><path d="M2 8.400h8.300" stroke="#000" stroke-width="1"/><path d="M6.150 11v2.800" stroke="#777" stroke-width="1"/></svg></div>
<div style="left:13px;top:391px;width:1016px;height:266px;background:#fff;border:1px solid #696969;box-sizing:border-box"></div>
<div style="left:14px;top:392px;width:1014px;height:1px;background:#404040;"></div>
<div class="gh" style="left:1012px;top:393px;width:14px;height:16px;border-right-color:#696969"></div>
<div class="gh" style="left:981px;top:393px;width:29px;height:16px"></div>
<div class="t" style="top:394.0px;line-height:16px;font-size:10.5px;color:#000080;white-space:nowrap;direction:rtl;left:845.0px;width:300px;text-align:center;transform-origin:50% 50%;transform:scaleX(0.8494);"><span id="t59">رديف</span></div>
<div class="gh" style="left:950px;top:393px;width:29px;height:16px"></div>
<div class="t" style="top:394.0px;line-height:16px;font-size:10.5px;color:#000080;white-space:nowrap;direction:rtl;left:814.0px;width:300px;text-align:center;transform-origin:50% 50%;transform:scaleX(0.8969);"><span id="t60">انبار</span></div>
<div class="gh" style="left:869px;top:393px;width:79px;height:16px"></div>
<div class="t" style="top:394.0px;line-height:16px;font-size:10.5px;color:#000080;white-space:nowrap;direction:rtl;left:758.0px;width:300px;text-align:center;transform-origin:50% 50%;transform:scaleX(0.9991);"><span id="t61">کد کالا</span></div>
<div class="gh" style="left:674px;top:393px;width:193px;height:16px"></div>
<div class="t" style="top:394.0px;line-height:16px;font-size:10.5px;color:#000080;white-space:nowrap;direction:rtl;left:620.0px;width:300px;text-align:center;transform-origin:50% 50%;transform:scaleX(1.1771);"><span id="t62">نام کالا</span></div>
<div class="gh" style="left:597px;top:393px;width:75px;height:16px"></div>
<div class="t" style="top:394.0px;line-height:16px;font-size:10.5px;color:#000080;white-space:nowrap;direction:rtl;left:484.0px;width:300px;text-align:center;transform-origin:50% 50%;transform:scaleX(0.9974);"><span id="t63">مقدار۱</span></div>
<div class="gh" style="left:510px;top:393px;width:85px;height:16px"></div>
<div class="t" style="top:394.0px;line-height:16px;font-size:10.5px;color:#000080;white-space:nowrap;direction:rtl;left:402.0px;width:300px;text-align:center;transform-origin:50% 50%;transform:scaleX(1.0884);"><span id="t64">في</span></div>
<div class="gh" style="left:416px;top:393px;width:92px;height:16px"></div>
<div class="t" style="top:394.0px;line-height:16px;font-size:10.5px;color:#000080;white-space:nowrap;direction:rtl;left:311.5px;width:300px;text-align:center;transform-origin:50% 50%;transform:scaleX(1.0807);"><span id="t65">مبلغ</span></div>
<div class="gh" style="left:335px;top:393px;width:79px;height:16px"></div>
<div class="t" style="top:394.0px;line-height:16px;font-size:10.5px;color:#000080;white-space:nowrap;direction:rtl;left:224.0px;width:300px;text-align:center;transform-origin:50% 50%;transform:scaleX(1.0396);"><span id="t66">باقيمانده</span></div>
<div class="gh" style="left:314px;top:393px;width:19px;height:16px"></div>
<div class="t" style="top:394.0px;line-height:16px;font-size:10.5px;color:#000080;white-space:nowrap;direction:rtl;left:173.0px;width:300px;text-align:center;transform-origin:50% 50%;transform:scaleX(1.1979);"><span id="t67">...</span></div>
<div style="left:314px;top:410px;width:715px;height:1px;background:#000;"></div>
<svg style="left:1013px;top:397px" width="12" height="9" viewBox="0 0 12 9"><path d="M0 0h12v2H0zM1 4h9v2H1zM4 7.200h4v1.800H4z" fill="#ff0000"/></svg>
<div style="left:314px;top:411px;width:698px;height:20px;background:#fff;"></div>
<div style="left:981px;top:411px;width:31px;height:20px;background:#e1e1e1;"></div>
<div style="left:335px;top:411px;width:81px;height:20px;background:#e1e1e1;"></div>
<div style="left:510px;top:411px;width:87px;height:20px;background:#0078d7;"></div>
<div style="left:313px;top:411px;width:1px;height:21px;background:#c0c0c0;"></div>
<div style="left:334px;top:411px;width:1px;height:21px;background:#c0c0c0;"></div>
<div style="left:415px;top:411px;width:1px;height:21px;background:#c0c0c0;"></div>
<div style="left:509px;top:411px;width:1px;height:21px;background:#c0c0c0;"></div>
<div style="left:596px;top:411px;width:1px;height:21px;background:#c0c0c0;"></div>
<div style="left:673px;top:411px;width:1px;height:21px;background:#c0c0c0;"></div>
<div style="left:868px;top:411px;width:1px;height:21px;background:#c0c0c0;"></div>
<div style="left:949px;top:411px;width:1px;height:21px;background:#c0c0c0;"></div>
<div style="left:980px;top:411px;width:1px;height:21px;background:#c0c0c0;"></div>
<div style="left:313px;top:431px;width:700px;height:1px;background:#c0c0c0;"></div>
<div class="gh" style="left:1012px;top:411px;width:14px;height:19px;border-right-color:#696969"></div>
<div style="left:1011px;top:411px;width:1px;height:21px;background:#000;"></div>
<svg style="left:1014px;top:415px" width="6" height="11" viewBox="0 0 6 11"><path d="M6 0v11L0 5.500z" fill="#000"/></svg>
<div class="t" id="t68" style="top:413.0px;line-height:16px;font-size:12.5px;color:#000;white-space:nowrap;direction:rtl;right:34px;transform-origin:100% 50%;">۱</div>
<div class="t" id="t69" style="top:413.0px;line-height:16px;font-size:12.5px;color:#000;white-space:nowrap;direction:rtl;right:65px;transform-origin:100% 50%;">۱</div>
<div class="t" id="t70" style="top:413.0px;line-height:16px;font-size:12.5px;color:#000;white-space:nowrap;direction:rtl;right:96px;transform-origin:100% 50%;transform:scaleX(0.9709);">۱۲۰۰۱</div>
<div class="t" id="t71" style="top:413.0px;line-height:16px;font-size:12.5px;color:#000;white-space:nowrap;direction:rtl;right:175px;transform-origin:100% 50%;transform:scaleX(1.0592);">هارد اکسترنال اي ديتا ۱ ترابايت</div>
<div class="t" id="t72" style="top:413.0px;line-height:16px;font-size:12.5px;color:#000;white-space:nowrap;direction:rtl;right:371px;transform-origin:100% 50%;">۱</div>
<div class="t" id="t73" style="top:413.0px;line-height:16px;font-size:12.5px;color:#fff;white-space:nowrap;direction:rtl;right:447px;transform-origin:100% 50%;transform:scaleX(1.0549);">۱۵,۱۰۰,۰۰۰</div>
<div class="t" id="t74" style="top:413.0px;line-height:16px;font-size:12.5px;color:#000;white-space:nowrap;direction:rtl;right:534px;transform-origin:100% 50%;transform:scaleX(1.0549);">۱۵,۱۰۰,۰۰۰</div>
<div class="bt" style="left:929px;top:657px;width:22px;height:20px"></div>
<div class="bt" style="left:953px;top:657px;width:22px;height:20px"></div>
<div class="bt" style="left:977px;top:657px;width:22px;height:20px"></div>
<div class="bt" style="left:1001px;top:657px;width:23px;height:20px"></div>
<svg style="left:933px;top:658px" width="16" height="16" viewBox="0 0 16 16"><g fill="url(#gNav)" stroke="#2038a8" stroke-width=".5"><path d="M3.800 2l7.800 6-7.800 6zM11.600 2h2.400v12h-2.400z"/></g></svg>
<svg style="left:957px;top:658px" width="16" height="16" viewBox="0 0 16 16"><g fill="url(#gNav)" stroke="#2038a8" stroke-width=".5"><path d="M4.500 2l7.500 6-7.500 6z"/></g></svg>
<svg style="left:981px;top:658px" width="16" height="16" viewBox="0 0 16 16"><g fill="url(#gNav)" stroke="#2038a8" stroke-width=".5"><path d="M11.500 2L4 8l7.500 6z"/></g></svg>
<svg style="left:1005px;top:658px" width="16" height="16" viewBox="0 0 16 16"><g fill="url(#gNav)" stroke="#2038a8" stroke-width=".5"><path d="M13 2L5.200 8l7.800 6zM2.800 2h2.400v12H2.800z"/></g></svg>
<div class="cb" style="left:1012px;top:683px"></div>
<div class="cb" style="left:1013px;top:699px;background:#f0f0f0"><svg width="11" height="11" viewBox="0 0 11 11" style="left:-1px;top:-1px"><path d="M2.200 5l2.300 2.600L8.800 2.600v2.400L4.500 10L2.200 7.400z" fill="#868686"/></svg></div>
<div class="t" id="t75" style="top:679.5px;line-height:16px;font-size:10.2px;color:#000;white-space:nowrap;direction:rtl;right:35.5px;transform-origin:100% 50%;transform:scaleX(1.0068);">کنترل فاکتور</div>
<div class="t" id="t76" style="top:695.9000000000001px;line-height:16px;font-size:10.2px;color:#000;white-space:nowrap;direction:rtl;right:34.5px;transform-origin:100% 50%;transform:scaleX(1.0163);">براي صادرات/ واردات</div>
<div class="t" id="t77" style="top:660.2px;line-height:16px;font-size:10.2px;color:#000;white-space:nowrap;direction:rtl;left:675px;transform-origin:0 50%;transform:scaleX(1.1245);">جمع:</div>
<div class="t" id="t78" style="top:683.1px;line-height:16px;font-size:10.2px;color:#000;white-space:nowrap;direction:rtl;left:675px;transform-origin:0 50%;transform:scaleX(1.0580);">تخفيف فاکتور%:</div>
<div class="t" id="t79" style="top:705.7px;line-height:16px;font-size:10.2px;color:#000;white-space:nowrap;direction:rtl;left:675px;transform-origin:0 50%;transform:scaleX(1.1309);">هزينه هاي فاکتور:</div>
<div class="t" id="t80" style="top:735.3000000000001px;line-height:16px;font-size:10.2px;color:#000;white-space:nowrap;direction:rtl;left:675px;transform-origin:0 50%;transform:scaleX(1.0881);">جمع کل:</div>
<div class="in" style="left:597px;top:657px;width:75px;height:20px;background:#fff"></div>
<div class="t" id="t81" style="top:660.0px;line-height:16px;font-size:13.5px;color:#6d6d6d;white-space:nowrap;direction:rtl;right:370px;transform-origin:100% 50%;">۱</div>
<div class="in" style="left:597px;top:680px;width:75px;height:20px;background:#fff"></div>
<div class="bt" style="left:597px;top:703px;width:75px;height:23px"></div>
<svg style="left:630px;top:708px" width="9" height="14" viewBox="0 0 9 14"><path d="M1 1l7 6-7 6z" fill="#3d6be0" stroke="#2440b0" stroke-width=".8"/></svg>
<div class="bt" style="left:510px;top:680px;width:84px;height:21px"></div>
<div class="t" style="top:683.5px;line-height:16px;font-size:10.2px;color:#000;white-space:nowrap;direction:rtl;left:403px;width:300px;text-align:center;transform-origin:50% 50%;transform:scaleX(1.0474);"><span id="t82">اعمال تخفيف</span></div>
<div class="bt" style="left:510px;top:705px;width:84px;height:21px"></div>
<div class="t" style="top:708.5px;line-height:16px;font-size:10.2px;color:#000;white-space:nowrap;direction:rtl;left:403px;width:300px;text-align:center;transform-origin:50% 50%;transform:scaleX(1.0678);"><span id="t83">اعمال هزينه ثابت</span></div>
<div class="in" style="left:416px;top:657px;width:92px;height:20px;background:#fff"></div>
<div class="t" id="t84" style="top:660.0px;line-height:16px;font-size:13.5px;color:#6d6d6d;white-space:nowrap;direction:rtl;right:534px;transform-origin:100% 50%;transform:scaleX(0.9769);">۱۵,۱۰۰,۰۰۰</div>
<div class="in" style="left:416px;top:680px;width:92px;height:20px;background:#fff"></div>
<div class="in" style="left:416px;top:705px;width:92px;height:20px;background:#fff"></div>
<div class="in" style="left:416px;top:731px;width:92px;height:20px;background:#fff"></div>
<div class="t" id="t85" style="top:734.0px;line-height:16px;font-size:13.5px;color:#6d6d6d;white-space:nowrap;direction:rtl;right:534px;transform-origin:100% 50%;transform:scaleX(0.9769);">۱۵,۱۰۰,۰۰۰</div>
<div style="left:9px;top:756px;width:1024px;height:1px;background:#a0a0a0;"></div>
<div style="left:9px;top:757px;width:1024px;height:1px;background:#696969;"></div>
<div style="left:9px;top:758px;width:1024px;height:1px;background:#fff;"></div>
<div style="left:9px;top:759px;width:1024px;height:51px;background:#f0f0f0;"></div>
<svg class="ic" style="left:996px;top:761px" width="36" height="34" viewBox="0 0 36 34"><rect x="8.700" y="1" width="18.300" height="19" fill="#fff" stroke="#1a7fd0" stroke-width="1.100"/><rect x="11" y="3.600" width="8" height="1.400" fill="#29b0f0"/><rect x="21" y="3.300" width="4" height="4" fill="#29b0f0"/><rect x="11" y="6.500" width="8" height="1.200" fill="#8ad4f8"/><rect x="11" y="10" width="14" height="3.400" fill="#12b4f4"/><rect x="11" y="15" width="14" height="1.400" fill="#8ad4f8"/><path d="M-1 28.500c0-6 3-9.500 6.500-10.500h5c3.500 1 6.500 4.500 6.500 10.500z" fill="#767676" stroke="#555" stroke-width=".6"/><path d="M6 18l2 5l2-5z" fill="#fff"/><path d="M7.400 19l.6 6l.6-6z" fill="#333"/><ellipse cx="8" cy="12.600" rx="4.300" ry="5" fill="#e0ba78" stroke="#a8804a" stroke-width=".5"/><path d="M3.500 12c-.6-4.500 2-6.600 4.800-6.600s5 2 4.300 6.400c-.8-2-1.800-3-4.600-3s-3.700 1.200-4.500 3.200z" fill="#7a4a1a"/><path d="M17 18.400v-1.600a1.400 1.400 0 0 1 1.400-1.400h4.200a1.400 1.400 0 0 1 1.400 1.400v1.600" fill="none" stroke="#8a4a0c" stroke-width="1.300"/><rect x="12" y="18.400" width="17" height="11.800" rx="1.400" fill="#bb6d1a" stroke="#7d430a" stroke-width=".8"/><rect x="12.400" y="18.800" width="16.200" height="4.400" fill="#cf8630"/><rect x="12" y="23" width="17" height="1" fill="#7d430a"/><rect x="19" y="21.800" width="3" height="3.400" rx=".6" fill="#f6c43a" stroke="#8a5a0a" stroke-width=".5"/></svg>
<div class="t" style="top:794.0px;line-height:16px;font-size:10.2px;color:#000;white-space:nowrap;direction:rtl;left:862px;width:300px;text-align:center;transform-origin:50% 50%;transform:scaleX(1.0679);"><span id="t86">حساب</span></div>
<svg class="ic" style="left:939px;top:761px" width="36" height="34" viewBox="0 0 36 34"><path d="M8.5 2.5h15.399999999999999l9 9v19h-24.4z" fill="url(#gPg)" stroke="#a2c5ee" stroke-width="1"/><path d="M10.0 28.0v-24h13.399999999999999" fill="none" stroke="#e4f0fc" stroke-width="1" opacity=".8"/><path d="M23.9 2.5v9h9z" fill="#f2f8fe" stroke="#a2c5ee" stroke-width=".8"/><path d="M23.9 11.5h9l-5.3999999999999995 3.15z" fill="#a9c9ee" opacity=".6"/><rect x="7.5" y="31.0" width="26.4" height="1" fill="#000" opacity=".12"/><path d="M11.500 9.500l1 1.200l1.600-2.400M11.500 13.500l1 1.200l1.600-2.400" fill="none" stroke="#d32" stroke-width="1"/><path d="M16 9.800h6M16 13.800h5M12 17.800h16M14 21.500h14M17 25.200h11" stroke="#444" stroke-width="1.300" stroke-dasharray="3 .8"/><rect x="-3" y="19" width="5" height="11" rx="1" fill="#2a8ae0" stroke="#0f5cb0" stroke-width=".8"/><path d="M2 21l4 -3h3l-1.500 2.500h9.500a1.500 1.500 0 0 1 0 3h-6a1.400 1.400 0 0 1 0 2.800h1a1.300 1.300 0 0 1 0 2.600h-1.500c-.5 1.100-1.500 1.100-2.500 1.100h-6z" fill="#fff" stroke="#555" stroke-width=".9" stroke-linejoin="round"/></svg>
<div class="t" style="top:794.0px;line-height:16px;font-size:10.2px;color:#000;white-space:nowrap;direction:rtl;left:805.8px;width:300px;text-align:center;transform-origin:50% 50%;transform:scaleX(1.1011);"><span id="t87">دريافت ليستي</span></div>
<svg class="ic" style="left:883px;top:761px" width="36" height="34" viewBox="0 0 36 34"><rect x="0" y="31.400" width="31" height="1" fill="#000" opacity=".15"/><path d="M.2 8.600L3.200 1.200h24.800l2.900 7.400z" fill="#e3d9c0" stroke="#5f4726" stroke-width=".8" stroke-linejoin="round"/><path d="M1.200 8.400h28.800v1.200H1.200z" fill="#5a2e2a" opacity=".75"/><rect x=".2" y="9.300" width="30.700" height="22.300" rx=".6" fill="url(#gBox)" stroke="#7d6438" stroke-width=".7"/><rect x=".6" y="9.400" width="30" height="1" fill="#e6d9b8" opacity=".8"/><rect x="13.200" y="1.600" width="4.700" height="13.100" fill="#ddd3bd"/><rect x="13.200" y="1.600" width="4.700" height="7" fill="#ece6d8"/><rect x="15.300" y="23" width="13.300" height="7.300" fill="#f4f2ea"/><rect x="15.300" y="23" width="4.500" height="4.200" fill="#4f4526"/><rect x="17.500" y="25.200" width="11" height="2.300" fill="#3a3a3a"/><rect x="19" y="28.600" width="8" height=".9" fill="#555"/></svg>
<div class="t" style="top:794.0px;line-height:16px;font-size:10.2px;color:#000;white-space:nowrap;direction:rtl;left:749px;width:300px;text-align:center;transform-origin:50% 50%;transform:scaleX(1.1623);"><span id="t88">کالا</span></div>
<svg class="ic" style="left:832px;top:761px" width="36" height="34" viewBox="0 0 36 34"><text x="16.800" y="30.800" font-family="Liberation Sans,sans-serif" font-weight="bold" font-size="40.500" fill="#7a9c1c" text-anchor="middle" textLength="34" lengthAdjust="spacingAndGlyphs">%</text></svg>
<div class="t" style="top:794.0px;line-height:16px;font-size:10.2px;color:#000;white-space:nowrap;direction:rtl;left:698.5px;width:300px;text-align:center;transform-origin:50% 50%;transform:scaleX(1.0397);"><span id="t89">وضع تخفيف</span></div>
<svg class="ic" style="left:782px;top:761px" width="36" height="34" viewBox="0 0 36 34"><path d="M2.8 2.5h14.7l9 9v20h-23.7z" fill="url(#gPg)" stroke="#a2c5ee" stroke-width="1"/><path d="M4.3 29.0v-25h12.7" fill="none" stroke="#e4f0fc" stroke-width="1" opacity=".8"/><path d="M17.5 2.5v9h9z" fill="#f2f8fe" stroke="#a2c5ee" stroke-width=".8"/><path d="M17.5 11.5h9l-5.3999999999999995 3.15z" fill="#a9c9ee" opacity=".6"/><rect x="1.7999999999999998" y="32.0" width="25.7" height="1" fill="#000" opacity=".12"/><text x="10.200" y="19.800" font-family="Liberation Sans,sans-serif" font-weight="bold" font-size="10.500" fill="#f01020" text-anchor="middle" textLength="11.500" lengthAdjust="spacingAndGlyphs">32</text><text x="10.200" y="29.200" font-family="Liberation Sans,sans-serif" font-weight="bold" font-size="10.500" fill="#a010e0" text-anchor="middle" textLength="11.500" lengthAdjust="spacingAndGlyphs">45</text><path d="M19.884 17.5h6.4319999999999995v6.3h3.4840000000000004L23.099999999999998 31.5L16.4 23.8h3.4840000000000004z" fill="url(#gAr)" stroke="#4d8a0a" stroke-width=".8" stroke-linejoin="round"/></svg>
<div class="t" style="top:794.0px;line-height:16px;font-size:10.2px;color:#000;white-space:nowrap;direction:rtl;left:644.5px;width:300px;text-align:center;transform-origin:50% 50%;transform:scaleX(1.0868);"><span id="t90">بترتيب کد</span></div>
<svg class="ic" style="left:731px;top:761px" width="36" height="34" viewBox="0 0 36 34"><path d="M3.8 2.5h14.399999999999999l9 9v20h-23.4z" fill="url(#gPg)" stroke="#a2c5ee" stroke-width="1"/><path d="M5.3 29.0v-25h12.399999999999999" fill="none" stroke="#e4f0fc" stroke-width="1" opacity=".8"/><path d="M18.2 2.5v9h9z" fill="#f2f8fe" stroke="#a2c5ee" stroke-width=".8"/><path d="M18.2 11.5h9l-5.3999999999999995 3.15z" fill="#a9c9ee" opacity=".6"/><rect x="2.8" y="32.0" width="25.4" height="1" fill="#000" opacity=".12"/><text x="9.800" y="15.800" font-family="Liberation Serif,serif" font-size="15" fill="#2a3ce0" text-anchor="middle">A</text><text x="15" y="28.800" font-family="Liberation Serif,serif" font-size="15" fill="#e8202a" text-anchor="middle">B</text><path d="M20.936 17.5h6.528v6.3h3.536L24.2 31.5L17.4 23.8h3.536z" fill="url(#gAr)" stroke="#4d8a0a" stroke-width=".8" stroke-linejoin="round"/></svg>
<div class="t" style="top:794.0px;line-height:16px;font-size:10.2px;color:#000;white-space:nowrap;direction:rtl;left:596px;width:300px;text-align:center;transform-origin:50% 50%;transform:scaleX(1.0463);"><span id="t91">بترتيب نام</span></div>
<svg class="ic" style="left:629px;top:761px" width="36" height="34" viewBox="0 0 36 34"><path d="M14.2 2.5h15.3l9 9v19.6h-24.3z" fill="url(#gPg)" stroke="#a2c5ee" stroke-width="1"/><path d="M15.7 28.6v-24.6h13.3" fill="none" stroke="#e4f0fc" stroke-width="1" opacity=".8"/><path d="M29.5 2.5v9h9z" fill="#f2f8fe" stroke="#a2c5ee" stroke-width=".8"/><path d="M29.5 11.5h9l-5.3999999999999995 3.15z" fill="#a9c9ee" opacity=".6"/><rect x="13.2" y="31.6" width="26.3" height="1" fill="#000" opacity=".12"/><rect x="2.4" y="19.5" width="5" height="11" rx="1" fill="#a9d40c" stroke="#5f8a0a" stroke-width=".8"/><path d="M7.4 21.5l4 -3h3l-1.500 2.500h9.500a1.500 1.500 0 0 1 0 3h-6a1.400 1.400 0 0 1 0 2.800h1a1.300 1.300 0 0 1 0 2.600h-1.500c-.5 1.100-1.500 1.100-2.500 1.100h-6z" fill="#fff" stroke="#555" stroke-width=".9" stroke-linejoin="round"/></svg>
<div class="t" style="top:794.0px;line-height:16px;font-size:10.2px;color:#000;white-space:nowrap;direction:rtl;left:503px;width:300px;text-align:center;transform-origin:50% 50%;transform:scaleX(1.0654);"><span id="t92">برگ دريافت</span></div>
<svg class="ic" style="left:584px;top:761px" width="36" height="34" viewBox="0 0 36 34"><path d="M.6 8h30.200v21.500H.6z" fill="#1c5cb4" stroke="#0f4290" stroke-width=".8"/><path d="M2.200 6.500c4-1.200 9-1 13.500 1.500V28c-4.500-2-9.500-2.200-13.500-1z" fill="#f7ead0" stroke="#c9b48a" stroke-width=".5"/><path d="M29.200 6.500c-4-1.200-9-1-13.500 1.500V28c4.500-2 9.500-2.200 13.500-1z" fill="#f3e2c0" stroke="#c9b48a" stroke-width=".5"/><path d="M15.700 8c-1.500-3-4-5.500-8-7.200v20C11.700 22.500 14.200 25 15.700 28z" fill="#fbf2df" stroke="#c9b48a" stroke-width=".5"/><path d="M15.700 8c.8-2.400 2-4 4.300-5.300v19.600c-2.300 1.400-3.500 3.200-4.300 5.700z" fill="#efdcb6" stroke="#c9b48a" stroke-width=".5"/><path d="M14.700 29.500h2v1.300l-1-.6l-1 .6z" fill="#1c5cb4"/></svg>
<div class="t" style="top:794.0px;line-height:16px;font-size:10.2px;color:#000;white-space:nowrap;direction:rtl;left:450px;width:300px;text-align:center;transform-origin:50% 50%;transform:scaleX(1.0782);"><span id="t93">دفترقسط</span></div>
<svg class="ic" style="left:540px;top:761px" width="36" height="34" viewBox="0 0 36 34"><path d="M7 7.200C6.300 5.600 8 4.300 9.600 5L11.300 4.200C12.300 2.600 14.600 2.800 15.600 4L24 11.500C25 9 25 6.500 25.300 4.800C26 2.300 29.600 3 29.700 6C30.700 10.500 30.500 15.500 28 20C25.500 24.500 20.500 26.600 16 25.600L12 22z" fill="url(#gHb)" stroke="#fff" stroke-width="1.600" stroke-linejoin="round"/><path d="M0 21C0 17 4 13 8 9C9.500 7.500 11 8 12 9L13.500 8.500C15 7.500 16.500 8.500 17 9.600L18 9.500C19.500 9 21 10 21 11.500C22.500 12 23 13.500 22 15L14.600 25.400C17 26 19.500 25.400 21 26.500C22 27.500 21.500 29 19 30C15 32 9 32.500 5 30.500C1.500 28.500 0 25 0 21z" fill="url(#gHf)" stroke="#fff" stroke-width="1.600" stroke-linejoin="round"/><path d="M6.300 17.500L10.600 12M10 20L14.600 13.600M14 22.500L19 15.600" stroke="#fff" stroke-width="1.100" stroke-linecap="round" fill="none"/></svg>
<div class="t" style="top:794.0px;line-height:16px;font-size:10.2px;color:#000;white-space:nowrap;direction:rtl;left:406px;width:300px;text-align:center;transform-origin:50% 50%;transform:scaleX(1.0987);"><span id="t94">تسويه</span></div>
<svg class="ic" style="left:497px;top:761px" width="36" height="34" viewBox="0 0 36 34"><path d="M19 28L26.700 4.400" stroke="#7a7a7a" stroke-width="1.700" fill="none"/><path d="M5 28.300h14.500" stroke="#6a6a6a" stroke-width="1.600"/><path d="M25.800 3.700l6.200-1.700" stroke="#d8222c" stroke-width="3.200" stroke-linecap="round"/><path d="M2.400 9l12.500-2.200l3.600 18.700L6 27.700z" fill="#96562a" stroke="#5f3212" stroke-width=".7"/><path d="M2.400 9l12.500-2.200l.9 4.400L3.300 13.400z" fill="#b0703a"/><path d="M8.200 8l3.800 19" stroke="#6f3c18" stroke-width="1.100"/><path d="M5.500 19.500l7.500-2.600" stroke="#c03a2a" stroke-width="1.400" opacity=".8"/><circle cx="23.300" cy="27" r="4.600" fill="#1c1c1c"/><circle cx="23.300" cy="27" r="1.900" fill="#d8d8d8"/><circle cx="23.300" cy="27" r=".8" fill="#555"/></svg>
<div class="t" style="top:794.0px;line-height:16px;font-size:10.2px;color:#000;white-space:nowrap;direction:rtl;left:362.6px;width:300px;text-align:center;transform-origin:50% 50%;transform:scaleX(1.0076);"><span id="t95">ارسال</span></div>
<svg class="ic" style="left:454px;top:761px" width="36" height="34" viewBox="0 0 36 34"><rect x="-.4" y="6.800" width="33.600" height="23.800" rx=".8" fill="#8a9a74" stroke="#5f6f4c" stroke-width=".8"/><rect x="-.4" y="4.400" width="33.600" height="23.800" rx=".8" fill="#b5c3a0" stroke="#5f6f4c" stroke-width=".8"/><rect x="1.600" y="6.400" width="29.600" height="19.800" fill="none" stroke="#5f7a4c" stroke-width="1.100"/><ellipse cx="7" cy="16.300" rx="4" ry="5.800" fill="#93a880" stroke="#5f7a4c" stroke-width=".8"/><ellipse cx="27" cy="13" rx="2.600" ry="2.600" fill="#93a880" stroke="#5f7a4c" stroke-width=".8"/><path d="M2.500 8.500h6M2.500 24h7M23 8.500h7" stroke="#5f7a4c" stroke-width="1.400"/><rect x="10.800" y="3.600" width="10.600" height="27.400" fill="#d9d9d9"/><rect x="13.600" y="3.600" width="5" height="27.400" fill="#f4f4f4"/><rect x="10.800" y="3.600" width="1.700" height="27.400" fill="#e8701a"/><rect x="19.700" y="3.600" width="1.700" height="27.400" fill="#e8701a"/><g fill="#e6a52a" stroke="#9a6208" stroke-width=".6"><rect x="24" y="26.800" width="8.500" height="2.600" rx="1.200"/><rect x="25.500" y="24.400" width="8.500" height="2.600" rx="1.200"/><rect x="22.500" y="22" width="8.500" height="2.600" rx="1.200"/><rect x="26" y="28.800" width="8" height="2.600" rx="1.200"/></g></svg>
<div class="t" style="top:794.0px;line-height:16px;font-size:10.2px;color:#000;white-space:nowrap;direction:rtl;left:321.5px;width:300px;text-align:center;transform-origin:50% 50%;transform:scaleX(1.0909);"><span id="t96">پرداختها</span></div>
<svg class="ic" style="left:411px;top:761px" width="36" height="34" viewBox="0 0 36 34"><rect x="0.5" y="6.2059999999999995" width="14" height="9.594000000000001" fill="url(#gBr)" stroke="#8a6a3a" stroke-width=".7"/><path d="M0.5 6.2059999999999995l0.9800000000000001 -2.706h12.04l0.9800000000000001 2.706z" fill="#dcc79c" stroke="#8a6a3a" stroke-width=".7"/><rect x="6.38" y="3.5" width="2.24" height="5.781000000000001" fill="#ece4d2" opacity=".9"/><rect x="23" y="4.306" width="12" height="9.594000000000001" fill="url(#gBr)" stroke="#8a6a3a" stroke-width=".7"/><path d="M23 4.306l0.8400000000000001 -2.706h10.32l0.8400000000000001 2.706z" fill="#dcc79c" stroke="#8a6a3a" stroke-width=".7"/><rect x="28.04" y="1.6" width="1.92" height="5.781000000000001" fill="#ece4d2" opacity=".9"/><rect x="4.800" y="9" width="4" height="1.200" fill="#3a2a1a"/><rect x="27.300" y="7" width="3.600" height="1.200" fill="#3a2a1a"/><path d="M-.5 16.400h16M22 14.500h14.500" stroke="#e6e6e6" stroke-width="1.500"/><path d="M7 16.500v10M29.500 14.800v4" stroke="#555" stroke-width="1.600"/><path d="M6 27.300L30 18.600" stroke="#9a9a9a" stroke-width="3.200" stroke-linecap="round"/><path d="M6 26.600L30 17.900" stroke="#d0d0d0" stroke-width="1" stroke-linecap="round"/><path d="M10.500 30.600c1-5.500 3.500-8.600 7-8.600s6 3.100 7 8.600z" fill="#1a1a1a"/><path d="M15.500 23.400l3-1.800l2 3z" fill="#d8242c"/><circle cx="17.500" cy="23" r="1.300" fill="#c8c8c8"/><circle cx="6.300" cy="27.300" r="1.600" fill="#444"/><circle cx="29.800" cy="18.500" r="1.600" fill="#444"/></svg>
<div class="t" style="top:794.0px;line-height:16px;font-size:10.2px;color:#000;white-space:nowrap;direction:rtl;left:279.3px;width:300px;text-align:center;transform-origin:50% 50%;transform:scaleX(1.0372);"><span id="t97">باسکول</span></div>
<svg class="ic" style="left:367px;top:761px" width="36" height="34" viewBox="0 0 36 34"><rect x="8" y="-.3" width="11" height="6.600" rx=".8" fill="#566872" stroke="#3c4c54" stroke-width=".6"/><rect x="10" y="1.300" width="5" height="1.700" fill="#e8d820"/><rect x="12.800" y="6.300" width="2.600" height="14" fill="#8c9ca8"/><path d="M4.500 17.600h11.500l1.600 9.600H.4z" fill="#cdd9e4" stroke="#9fb0be" stroke-width=".6"/><path d="M.4 27.200h17.200v2.200H.4z" fill="#aebdca"/><rect x="2.400" y="29.400" width="2.200" height="1.600" fill="#7f8f9c"/><rect x="13.500" y="29.400" width="2.200" height="1.600" fill="#7f8f9c"/><circle cx="22.500" cy="25" r="7.600" fill="#2f9d4c"/><g transform="translate(22.500 25) rotate(-35)"><path d="M-4.600 -2.600h6.600l2.600 2.600l-2.600 2.600h-6.600z" fill="#fff" stroke="#e0262c" stroke-width="1.200"/><circle cx="2" cy="0" r=".8" fill="#e0262c"/><path d="M-3 -1v2M-1.500 -1v2" stroke="#e0262c" stroke-width=".7"/></g></svg>
<div class="t" style="top:794.0px;line-height:16px;font-size:10.2px;color:#000;white-space:nowrap;direction:rtl;left:233.5px;width:300px;text-align:center;transform-origin:50% 50%;transform:scaleX(1.0247);"><span id="t98">فيش ترازو</span></div>
<svg class="ic" style="left:314px;top:761px" width="36" height="34" viewBox="0 0 36 34"><text x="17.200" y="31" font-family="Liberation Sans,sans-serif" font-weight="bold" font-size="42" fill="#ff1d1d" text-anchor="middle" textLength="35" lengthAdjust="spacingAndGlyphs">%</text></svg>
<div class="t" style="top:794.0px;line-height:16px;font-size:10.2px;color:#000;white-space:nowrap;direction:rtl;left:179px;width:300px;text-align:center;transform-origin:50% 50%;transform:scaleX(1.0410);"><span id="t99">وضع هزينه</span></div>
<svg class="ic" style="left:260px;top:761px" width="36" height="34" viewBox="0 0 36 34"><rect x="19.500" y="3" width="12.500" height="16" fill="#e6e6e6"/><rect x="1.400" y="3" width="19" height="27.400" rx="2.400" fill="#4d5b6b" stroke="#323e4a" stroke-width=".8"/><rect x="3.400" y="6.200" width="15" height="11.600" fill="#8db6f2"/><rect x="3.400" y="6.200" width="15" height="3" fill="#a9c8f6"/><rect x="7.500" y="4.200" width="7" height="1" rx=".5" fill="#2a343e"/><path d="M3.600 20.300h4M3.600 23h4M3.600 25.700h4M3.600 28.300h4M8.800 20.300h2" stroke="#2f3a46" stroke-width="1.500"/><rect x="10.700" y="18.500" width="21.300" height="12.100" fill="#f3aa22" stroke="#d08410" stroke-width=".7"/><path d="M10.700 30.600l8.300-6.800M32 30.600l-8.300-6.800" stroke="#d48c12" stroke-width=".8"/><path d="M10.700 18.500l10.650 7.800L32 18.500z" fill="#f9c04a" stroke="#d08410" stroke-width=".7" stroke-linejoin="round"/></svg>
<div class="t" style="top:794.0px;line-height:16px;font-size:10.2px;color:#000;white-space:nowrap;direction:rtl;left:126.5px;width:300px;text-align:center;transform-origin:50% 50%;transform:scaleX(1.0115);"><span id="t100">پيام کوتاه</span></div>
<svg class="ic" style="left:203px;top:761px" width="36" height="34" viewBox="0 0 36 34"><path d="M1.600 4.500l4-2.800l6 1.200v24l-7.600 2z" fill="#e07f10" stroke="#2a2a2a" stroke-width=".8"/><path d="M5.500 1.400L22.500 .6l2 3.400v15H6.500z" fill="#fff" stroke="#2a2a2a" stroke-width=".8"/><path d="M18 .9l4.500-.3l2 3.400l-5.500 .3z" fill="#d8d8d8"/><path d="M2.400 29l2.700-15.500l8-2l2.600 2.400l13.200-3.200l.6 14.800l-9.500 3.500z" fill="#f8cb12" stroke="#2a2a2a" stroke-width=".8" stroke-linejoin="round"/><path d="M5.600 14.300l7.300-1.800l2.500 2.300l12.600-3" fill="none" stroke="#fce88a" stroke-width="1"/><path d="M14.500 26.500L23.500 13.800l6.500 1.700l1.600 6L22.400 31l-5.400-.8z" fill="#f5c20e" stroke="#2a2a2a" stroke-width=".8" stroke-linejoin="round"/><circle cx="17" cy="28.200" r="1.100" fill="#fff" stroke="#2a2a2a" stroke-width=".5"/></svg>
<div class="t" style="top:794.0px;line-height:16px;font-size:10.2px;color:#000;white-space:nowrap;direction:rtl;left:65.4px;width:300px;text-align:center;transform-origin:50% 50%;transform:scaleX(1.1008);"><span id="t101">سريال تجمعي</span></div>
<svg class="ic" style="left:133px;top:761px" width="36" height="34" viewBox="0 0 36 34"><rect x="-2" y="-1" width="37" height="34.500" fill="#e7e7e7"/><rect x="2.300" y="3" width="21.500" height="28.600" rx="3" fill="#b9790c"/><rect x="23.800" y="13.800" width="7.200" height="15.900" rx="2.200" fill="#b9790c"/><rect x="25.800" y="16.400" width="2.700" height="10.600" rx=".8" fill="#e7e7e7"/><rect x="5.300" y="5.800" width="15.500" height="6.600" rx="1" fill="#fbfbfb"/><path d="M7.600 7.800v2.600M10 7.800v2.600M12.400 7.800v2.600M14.800 7.800v2.600" stroke="#e0262c" stroke-width="1.200" stroke-dasharray=".8 .4"/><g fill="#fbfbfb"><rect x="6.0" y="15.6" width="3.200" height="2.600" rx=".4"/><rect x="11.2" y="15.6" width="3.200" height="2.600" rx=".4"/><rect x="16.4" y="15.6" width="3.200" height="2.600" rx=".4"/><rect x="6.0" y="19.6" width="3.200" height="2.600" rx=".4"/><rect x="11.2" y="19.6" width="3.200" height="2.600" rx=".4"/><rect x="16.4" y="19.6" width="3.200" height="2.600" rx=".4"/><rect x="6.0" y="23.6" width="3.200" height="2.600" rx=".4"/><rect x="11.2" y="23.6" width="3.200" height="2.600" rx=".4"/><rect x="16.4" y="23.6" width="3.200" height="2.600" rx=".4"/><rect x="6.0" y="27.6" width="3.200" height="2.600" rx=".4"/><rect x="11.2" y="27.6" width="3.200" height="2.600" rx=".4"/><rect x="16.4" y="27.6" width="3.200" height="2.600" rx=".4"/></g></svg>
<div class="t" style="top:794.0px;line-height:16px;font-size:10.2px;color:#000;white-space:nowrap;direction:rtl;left:-2.0999999999999943px;width:300px;text-align:center;transform-origin:50% 50%;transform:scaleX(1.0087);"><span id="t102">دريافت سريع</span></div>
<svg class="ic" style="left:78px;top:761px" width="36" height="34" viewBox="0 0 36 34"><ellipse cx="13" cy="30.300" rx="11" ry="1" fill="#000" opacity=".1"/><g transform="translate(10.500 21.500) rotate(-42)"><rect x="-10.500" y="-5" width="21" height="10" rx="5" fill="none" stroke="#6f6f6f" stroke-width="3.600"/><rect x="-10.500" y="-5" width="21" height="10" rx="5" fill="none" stroke="#d4d4d4" stroke-width="1.800"/></g><g transform="translate(22.700 10.700) rotate(-42)"><rect x="-10" y="-5" width="20" height="10" rx="5" fill="none" stroke="#127fa8" stroke-width="3.600"/><rect x="-10" y="-5" width="20" height="10" rx="5" fill="none" stroke="#2bb4de" stroke-width="1.800"/></g><g transform="translate(10.500 21.500) rotate(-42)"><path d="M-2 -5h7.500a5 5 0 0 1 5 5" fill="none" stroke="#6f6f6f" stroke-width="3.600"/><path d="M-2 -5h7.500a5 5 0 0 1 5 5" fill="none" stroke="#d4d4d4" stroke-width="1.800"/></g></svg>
<div class="t" style="top:794.0px;line-height:16px;font-size:10.2px;color:#000;white-space:nowrap;direction:rtl;left:-55.599999999999994px;width:300px;text-align:center;transform-origin:50% 50%;transform:scaleX(0.9525);"><span id="t103">مرتبط به</span></div>
<svg class="ic" style="left:29px;top:761px" width="36" height="34" viewBox="0 0 36 34"><path d="M2.300 19.800L15.400 6.600l10 -.2l.3 9.600L11 28.300z" fill="#fbfbfb" stroke="#8a8a8a" stroke-width=".9" stroke-linejoin="round"/><path d="M2.300 19.800L15.400 6.600" stroke="#8fb4e8" stroke-width=".8"/><circle cx="22" cy="10" r="1.500" fill="#fff" stroke="#5f8fd0" stroke-width=".7"/><path d="M22 10c-2 3-5 7-6.500 12M22 10c2.500 3 3.300 8 2.800 13" fill="none" stroke="#9a9a9a" stroke-width=".8"/><path d="M7.80 19.00L9.25 17.63L10.40 20.48L16.00 14.60L10.60 23.00z" fill="#5fae1e" stroke="#4a9410" stroke-width=".7" stroke-linejoin="round"/><text x="21.200" y="30.600" font-family="Liberation Sans,sans-serif" font-weight="bold" font-size="10.500" fill="#000" text-anchor="middle" textLength="15" lengthAdjust="spacingAndGlyphs">BN</text></svg>
<div class="t" style="top:794.0px;line-height:16px;font-size:10.2px;color:#000;white-space:nowrap;direction:rtl;left:-106.25px;width:300px;text-align:center;transform-origin:50% 50%;transform:scaleX(1.0868);"><span id="t104">سري ساخت</span></div>
<div style="left:677px;top:759px;width:44px;height:51px;background:#f0f0f0;"></div>
<svg class="ic" style="left:682px;top:761px" width="36" height="34" viewBox="0 0 36 34"><rect x="-.5" y="4.600" width="34.500" height="23.600" fill="#fafafa"/><rect x="0" y="5" width="1.6" height="22.5" fill="#4a4a4a"/><rect x="2.4" y="5" width="0.8" height="20.5" fill="#1a1a1a"/><rect x="4" y="5" width="2" height="20.5" fill="#1a1a1a"/><rect x="6.8" y="5" width="0.8" height="20.5" fill="#4a4a4a"/><rect x="8.2" y="5" width="1.4" height="20.5" fill="#1a1a1a"/><rect x="10.6" y="5" width="2.2" height="22.5" fill="#1a1a1a"/><rect x="13.6" y="5" width="0.8" height="20.5" fill="#4a4a4a"/><rect x="15.2" y="5" width="1.4" height="20.5" fill="#1a1a1a"/><rect x="17.6" y="5" width="0.8" height="20.5" fill="#1a1a1a"/><rect x="19" y="5" width="2.2" height="20.5" fill="#4a4a4a"/><rect x="22" y="5" width="1" height="22.5" fill="#1a1a1a"/><rect x="23.8" y="5" width="0.8" height="20.5" fill="#1a1a1a"/><rect x="25.4" y="5" width="2" height="20.5" fill="#4a4a4a"/><rect x="28.2" y="5" width="0.8" height="20.5" fill="#1a1a1a"/><rect x="29.6" y="5" width="1.4" height="20.5" fill="#1a1a1a"/><rect x="31.8" y="5" width="1.6" height="22.5" fill="#4a4a4a"/><rect x="-.5" y="13.400" width="34.500" height="2.200" fill="#e8205a"/><rect x="1" y="14.200" width="31" height=".7" fill="#ff9ab8"/><text x="17" y="28" font-family="Liberation Sans,sans-serif" font-size="4" fill="#444" text-anchor="middle">1 4022 3294 6 49</text></svg>
<div class="t" style="top:794.5px;line-height:16px;font-size:10.2px;color:#000;white-space:nowrap;direction:rtl;left:549.3px;width:300px;text-align:center;transform-origin:50% 50%;transform:scaleX(1.0364);"><span id="t105">سريال</span></div>
<div style="left:674px;top:755px;width:44px;height:55px;border:3px solid #ff0000;border-radius:10px"></div>
</body></html>
